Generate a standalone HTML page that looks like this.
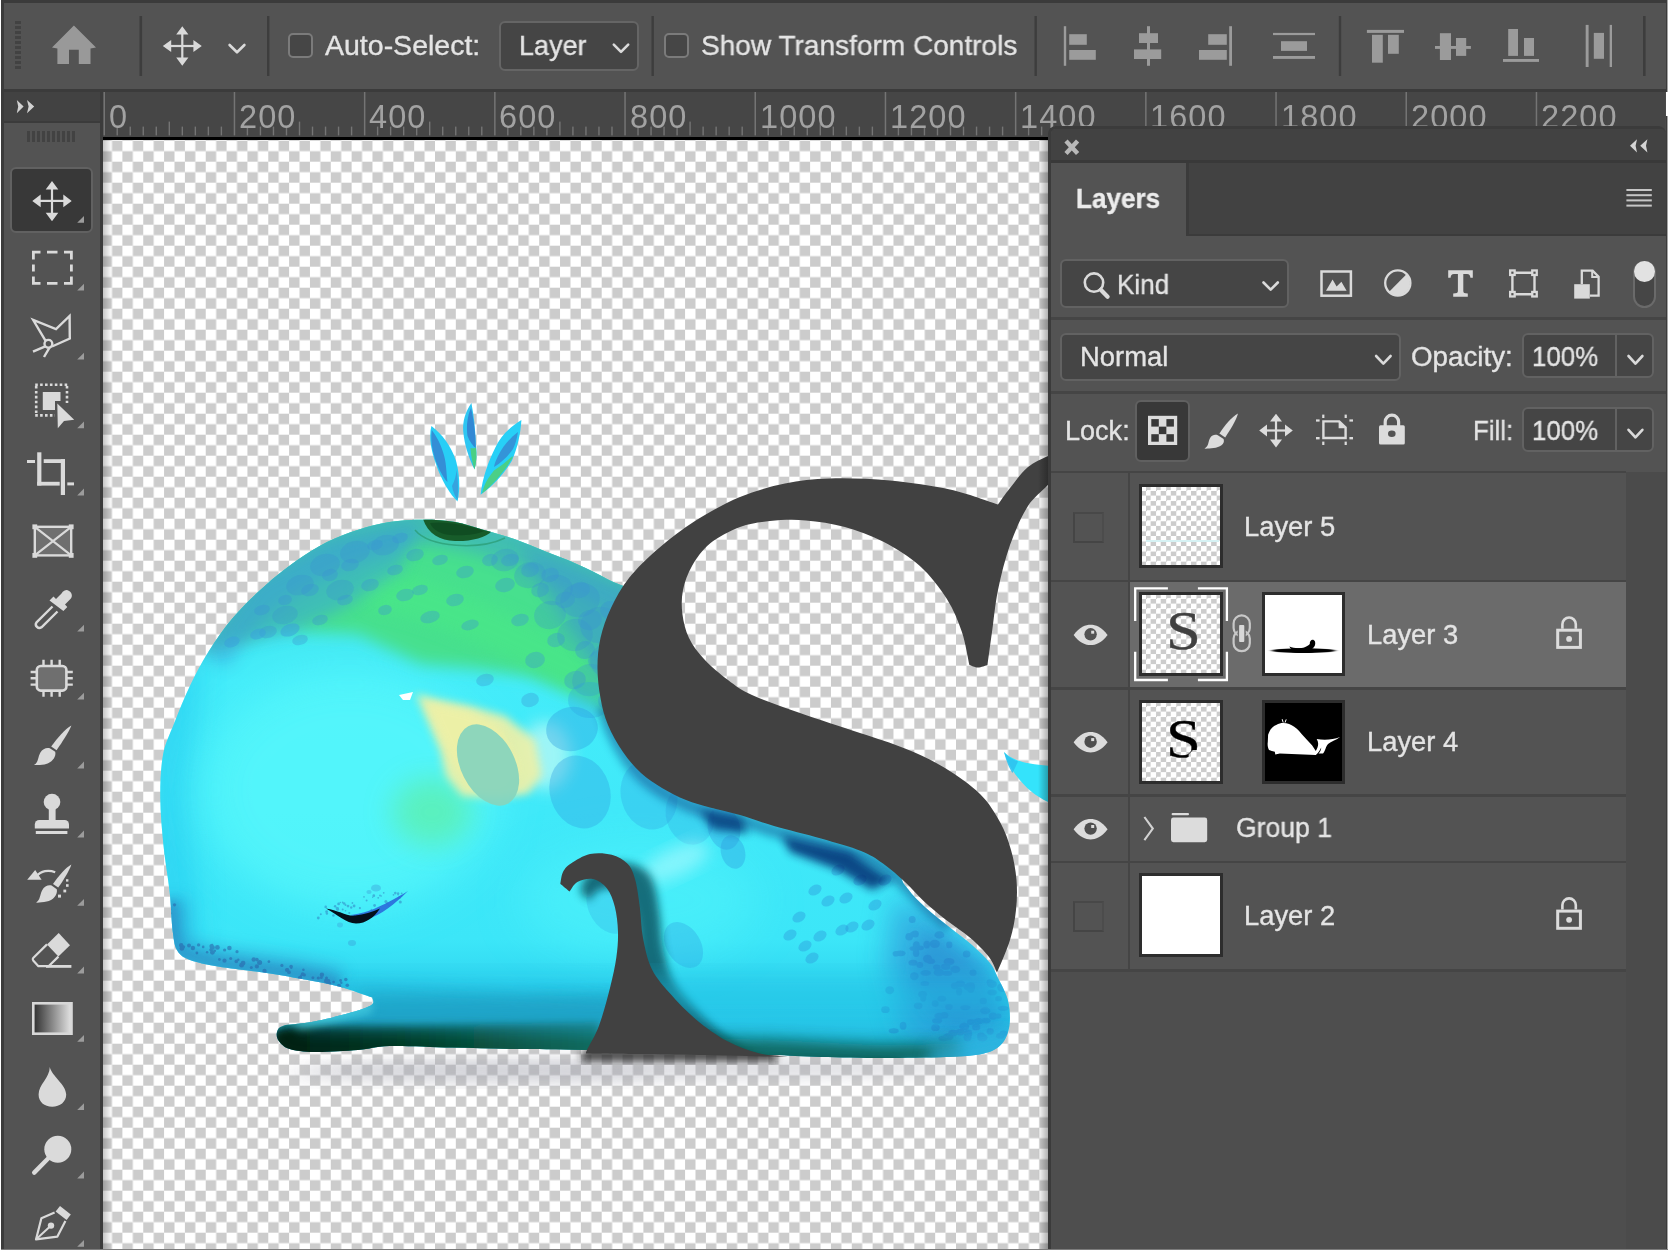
<!DOCTYPE html>
<html>
<head>
<meta charset="utf-8">
<title>Photoshop</title>
<style>
*{box-sizing:border-box;margin:0;padding:0}
html,body{width:1668px;height:1250px;overflow:hidden;background:#3b3b3b}
body{position:relative;font-family:"Liberation Sans",sans-serif;color:#e4e4e4}
.abs{position:absolute}
svg{position:absolute;overflow:visible;display:block}
.t{position:absolute;white-space:nowrap;line-height:1;transform-origin:0 0;will-change:transform;-webkit-text-stroke:.35px currentColor}
/* options bar */
#opt{left:4px;top:3px;width:1662px;height:86px;background:#535353}
.vsep{position:absolute;width:2px;background:#3e3e3e;top:16px;height:60px}
.cb{position:absolute;width:25px;height:25px;border:2px solid #7b7b7b;border-radius:5px;background:#464646}
.dd{position:absolute;border:2px solid #656565;border-radius:6px;background:#454545}
/* rulers */
#ruler{left:103px;top:92px;width:1563px;height:45px;background:#464646;overflow:hidden}
#ruler .n{position:absolute;top:9.2px;margin-left:-1px;font-size:32.5px;color:#a2a2a2;line-height:1;white-space:nowrap;letter-spacing:1.1px;will-change:transform}
#rtick{position:absolute;left:0;top:0}
/* toolbar */
#tbhead{left:4px;top:92px;width:96px;height:29px;background:#424242}
#tb{left:4px;top:123px;width:96px;height:1127px;background:#535353}
/* canvas */
#cv{left:103px;top:140px;width:945px;height:1110px;overflow:hidden;
background:#fff}
/* panel */
#pn{left:1048px;top:126px;width:618px;height:1124px;background:#535353;border-radius:8px 8px 0 0;overflow:hidden;border-left:3px solid #3b3b3b;border-top:3px solid #3b3b3b}
</style>
</head>
<body>
<!-- OPTIONS BAR -->
<div id="opt" class="abs"></div>
<div class="cb" style="left:288px;top:33px"></div>
<div class="dd" style="left:499px;top:21px;width:140px;height:50px"></div>
<div class="cb" style="left:664px;top:33px"></div>
<svg width="1668" height="92" viewBox="0 0 1668 92" style="left:0;top:0">
 <!-- grip -->
 <g fill="#424242">
  <rect x="15" y="21" width="6" height="3"/><rect x="15" y="26" width="6" height="3"/><rect x="15" y="31" width="6" height="3"/><rect x="15" y="36" width="6" height="3"/><rect x="15" y="41" width="6" height="3"/><rect x="15" y="46" width="6" height="3"/><rect x="15" y="51" width="6" height="3"/><rect x="15" y="56" width="6" height="3"/><rect x="15" y="61" width="6" height="3"/><rect x="15" y="66" width="6" height="3"/>
 </g>
 <!-- home -->
 <path fill="#999" d="M73.9 25.5 L96 47.5 L90.5 48.5 L90.5 64 L78.8 64 L78.8 49.8 L69 49.8 L69 64 L57.4 64 L57.4 48.5 L52 47.5 Z"/>
 <!-- separators -->
 <g fill="#3d3d3d">
  <rect x="139.5" y="16" width="2.6" height="60"/><rect x="267" y="16" width="2.4" height="60"/><rect x="651.5" y="16" width="2.4" height="60"/><rect x="1034.5" y="16" width="2.4" height="60"/><rect x="1338.8" y="16" width="2.4" height="60"/><rect x="1643" y="16" width="2.6" height="60"/>
 </g>
 <!-- move tool icon -->
 <g fill="#dadada" stroke="none">
  <rect x="170" y="44.9" width="24.6" height="2.2"/><rect x="181.2" y="33" width="2.2" height="26"/>
  <path d="M182.3 26.3 L188.4 34.6 L176.2 34.6 Z M182.3 65.8 L188.4 57.4 L176.2 57.4 Z M162.8 46 L171.2 39.9 L171.2 52.1 Z M201.8 46 L193.4 39.9 L193.4 52.1 Z"/>
 </g>
 <!-- chevrons -->
 <g fill="none" stroke="#dadada" stroke-width="2.6" stroke-linecap="round" stroke-linejoin="round">
  <path d="M229.6 45 L237 52.3 L244.4 45"/>
  <path d="M613.8 44.6 L621 51.8 L628.2 44.6"/>
 </g>
 <!-- align icons -->
 <g fill="#9b9b9b">
  <rect x="1063.8" y="26.2" width="2.4" height="39.6"/><rect x="1069.2" y="34.2" width="17.6" height="10.6"/><rect x="1069.2" y="50" width="26.6" height="9.8"/>
  <rect x="1147" y="26.2" width="3" height="39.6"/><rect x="1139" y="33.2" width="19" height="9.8"/><rect x="1134" y="49.4" width="27.2" height="9.6"/>
  <rect x="1229.2" y="26.2" width="2.8" height="39.6"/><rect x="1208.2" y="34.2" width="18.6" height="10.6"/><rect x="1199" y="50" width="27.8" height="9.8"/>
  <rect x="1273" y="32.9" width="42" height="2.2"/><rect x="1281" y="41.2" width="26" height="9.7"/><rect x="1273" y="56" width="42" height="2.9"/>
  <rect x="1366.9" y="29.9" width="37.1" height="3"/><rect x="1372" y="34.8" width="10.8" height="27.9"/><rect x="1388" y="34.8" width="10.8" height="19"/>
  <rect x="1435" y="46" width="35.9" height="2.9"/><rect x="1439.9" y="33.2" width="11.1" height="26.8"/><rect x="1456" y="38" width="10.2" height="17.9"/>
  <rect x="1503" y="59" width="36" height="2.9"/><rect x="1508.2" y="29" width="9.8" height="26.9"/><rect x="1524" y="38" width="10" height="17.9"/>
  <rect x="1585.7" y="24.9" width="2.9" height="42.1"/><rect x="1609.7" y="24.9" width="2.3" height="42.1"/><rect x="1593.8" y="32.9" width="10.2" height="25.9"/>
 </g>
</svg>
<div class="t" style="left:325px;top:30.8px;font-size:28.5px">Auto-Select:</div>
<div class="t" style="left:519.4px;top:30.8px;font-size:28.5px;transform:scaleX(.948)">Layer</div>
<div class="t" style="left:701px;top:30.8px;font-size:28.5px;transform:scaleX(.984)">Show Transform Controls</div>
<!-- RULER -->
<div id="ruler" class="abs"><svg id="rtick" width="1563" height="45" fill="#747474"><rect x="0.50" y="0" width="1.5" height="43.4"/><rect x="13.52" y="34.6" width="1.4" height="8.8"/><rect x="26.54" y="34.6" width="1.4" height="8.8"/><rect x="39.56" y="34.6" width="1.4" height="8.8"/><rect x="52.58" y="34.6" width="1.4" height="8.8"/><rect x="65.60" y="29.6" width="1.4" height="13.8"/><rect x="78.62" y="34.6" width="1.4" height="8.8"/><rect x="91.64" y="34.6" width="1.4" height="8.8"/><rect x="104.66" y="34.6" width="1.4" height="8.8"/><rect x="117.68" y="34.6" width="1.4" height="8.8"/><rect x="130.70" y="0" width="1.5" height="43.4"/><rect x="143.72" y="34.6" width="1.4" height="8.8"/><rect x="156.74" y="34.6" width="1.4" height="8.8"/><rect x="169.76" y="34.6" width="1.4" height="8.8"/><rect x="182.78" y="34.6" width="1.4" height="8.8"/><rect x="195.80" y="29.6" width="1.4" height="13.8"/><rect x="208.82" y="34.6" width="1.4" height="8.8"/><rect x="221.84" y="34.6" width="1.4" height="8.8"/><rect x="234.86" y="34.6" width="1.4" height="8.8"/><rect x="247.88" y="34.6" width="1.4" height="8.8"/><rect x="260.90" y="0" width="1.5" height="43.4"/><rect x="273.92" y="34.6" width="1.4" height="8.8"/><rect x="286.94" y="34.6" width="1.4" height="8.8"/><rect x="299.96" y="34.6" width="1.4" height="8.8"/><rect x="312.98" y="34.6" width="1.4" height="8.8"/><rect x="326.00" y="29.6" width="1.4" height="13.8"/><rect x="339.02" y="34.6" width="1.4" height="8.8"/><rect x="352.04" y="34.6" width="1.4" height="8.8"/><rect x="365.06" y="34.6" width="1.4" height="8.8"/><rect x="378.08" y="34.6" width="1.4" height="8.8"/><rect x="391.10" y="0" width="1.5" height="43.4"/><rect x="404.12" y="34.6" width="1.4" height="8.8"/><rect x="417.14" y="34.6" width="1.4" height="8.8"/><rect x="430.16" y="34.6" width="1.4" height="8.8"/><rect x="443.18" y="34.6" width="1.4" height="8.8"/><rect x="456.20" y="29.6" width="1.4" height="13.8"/><rect x="469.22" y="34.6" width="1.4" height="8.8"/><rect x="482.24" y="34.6" width="1.4" height="8.8"/><rect x="495.26" y="34.6" width="1.4" height="8.8"/><rect x="508.28" y="34.6" width="1.4" height="8.8"/><rect x="521.30" y="0" width="1.5" height="43.4"/><rect x="534.32" y="34.6" width="1.4" height="8.8"/><rect x="547.34" y="34.6" width="1.4" height="8.8"/><rect x="560.36" y="34.6" width="1.4" height="8.8"/><rect x="573.38" y="34.6" width="1.4" height="8.8"/><rect x="586.40" y="29.6" width="1.4" height="13.8"/><rect x="599.42" y="34.6" width="1.4" height="8.8"/><rect x="612.44" y="34.6" width="1.4" height="8.8"/><rect x="625.46" y="34.6" width="1.4" height="8.8"/><rect x="638.48" y="34.6" width="1.4" height="8.8"/><rect x="651.50" y="0" width="1.5" height="43.4"/><rect x="664.52" y="34.6" width="1.4" height="8.8"/><rect x="677.54" y="34.6" width="1.4" height="8.8"/><rect x="690.56" y="34.6" width="1.4" height="8.8"/><rect x="703.58" y="34.6" width="1.4" height="8.8"/><rect x="716.60" y="29.6" width="1.4" height="13.8"/><rect x="729.62" y="34.6" width="1.4" height="8.8"/><rect x="742.64" y="34.6" width="1.4" height="8.8"/><rect x="755.66" y="34.6" width="1.4" height="8.8"/><rect x="768.68" y="34.6" width="1.4" height="8.8"/><rect x="781.70" y="0" width="1.5" height="43.4"/><rect x="794.72" y="34.6" width="1.4" height="8.8"/><rect x="807.74" y="34.6" width="1.4" height="8.8"/><rect x="820.76" y="34.6" width="1.4" height="8.8"/><rect x="833.78" y="34.6" width="1.4" height="8.8"/><rect x="846.80" y="29.6" width="1.4" height="13.8"/><rect x="859.82" y="34.6" width="1.4" height="8.8"/><rect x="872.84" y="34.6" width="1.4" height="8.8"/><rect x="885.86" y="34.6" width="1.4" height="8.8"/><rect x="898.88" y="34.6" width="1.4" height="8.8"/><rect x="911.90" y="0" width="1.5" height="43.4"/><rect x="924.92" y="34.6" width="1.4" height="8.8"/><rect x="937.94" y="34.6" width="1.4" height="8.8"/><rect x="950.96" y="34.6" width="1.4" height="8.8"/><rect x="963.98" y="34.6" width="1.4" height="8.8"/><rect x="977.00" y="29.6" width="1.4" height="13.8"/><rect x="990.02" y="34.6" width="1.4" height="8.8"/><rect x="1003.04" y="34.6" width="1.4" height="8.8"/><rect x="1016.06" y="34.6" width="1.4" height="8.8"/><rect x="1029.08" y="34.6" width="1.4" height="8.8"/><rect x="1042.10" y="0" width="1.5" height="43.4"/><rect x="1055.12" y="34.6" width="1.4" height="8.8"/><rect x="1068.14" y="34.6" width="1.4" height="8.8"/><rect x="1081.16" y="34.6" width="1.4" height="8.8"/><rect x="1094.18" y="34.6" width="1.4" height="8.8"/><rect x="1107.20" y="29.6" width="1.4" height="13.8"/><rect x="1120.22" y="34.6" width="1.4" height="8.8"/><rect x="1133.24" y="34.6" width="1.4" height="8.8"/><rect x="1146.26" y="34.6" width="1.4" height="8.8"/><rect x="1159.28" y="34.6" width="1.4" height="8.8"/><rect x="1172.30" y="0" width="1.5" height="43.4"/><rect x="1185.32" y="34.6" width="1.4" height="8.8"/><rect x="1198.34" y="34.6" width="1.4" height="8.8"/><rect x="1211.36" y="34.6" width="1.4" height="8.8"/><rect x="1224.38" y="34.6" width="1.4" height="8.8"/><rect x="1237.40" y="29.6" width="1.4" height="13.8"/><rect x="1250.42" y="34.6" width="1.4" height="8.8"/><rect x="1263.44" y="34.6" width="1.4" height="8.8"/><rect x="1276.46" y="34.6" width="1.4" height="8.8"/><rect x="1289.48" y="34.6" width="1.4" height="8.8"/><rect x="1302.50" y="0" width="1.5" height="43.4"/><rect x="1315.52" y="34.6" width="1.4" height="8.8"/><rect x="1328.54" y="34.6" width="1.4" height="8.8"/><rect x="1341.56" y="34.6" width="1.4" height="8.8"/><rect x="1354.58" y="34.6" width="1.4" height="8.8"/><rect x="1367.60" y="29.6" width="1.4" height="13.8"/><rect x="1380.62" y="34.6" width="1.4" height="8.8"/><rect x="1393.64" y="34.6" width="1.4" height="8.8"/><rect x="1406.66" y="34.6" width="1.4" height="8.8"/><rect x="1419.68" y="34.6" width="1.4" height="8.8"/><rect x="1432.70" y="0" width="1.5" height="43.4"/><rect x="1445.72" y="34.6" width="1.4" height="8.8"/><rect x="1458.74" y="34.6" width="1.4" height="8.8"/><rect x="1471.76" y="34.6" width="1.4" height="8.8"/><rect x="1484.78" y="34.6" width="1.4" height="8.8"/><rect x="1497.80" y="29.6" width="1.4" height="13.8"/><rect x="1510.82" y="34.6" width="1.4" height="8.8"/><rect x="1523.84" y="34.6" width="1.4" height="8.8"/><rect x="1536.86" y="34.6" width="1.4" height="8.8"/><rect x="1549.88" y="34.6" width="1.4" height="8.8"/><rect x="1562.90" y="0" width="1.5" height="43.4"/></svg><div class="n" style="left:6.8px">0</div><div class="n" style="left:137.0px">200</div><div class="n" style="left:267.2px">400</div><div class="n" style="left:397.4px">600</div><div class="n" style="left:527.6px">800</div><div class="n" style="left:657.8px">1000</div><div class="n" style="left:788.0px">1200</div><div class="n" style="left:918.2px">1400</div><div class="n" style="left:1048.4px">1600</div><div class="n" style="left:1178.6px">1800</div><div class="n" style="left:1308.8px">2000</div><div class="n" style="left:1439.0px">2200</div><div class="n" style="left:1569.2px">2400</div></div>
<!-- TOOLBAR -->
<div id="tbhead" class="abs"></div>
<div id="tb" class="abs"></div>
<div class="abs" style="left:10px;top:166.5px;width:83px;height:66px;background:#383838;border:2px solid #616161;border-radius:6px"></div>
<svg width="104" height="1250" viewBox="0 0 104 1250" style="left:0;top:0">
 <!-- >> -->
 <path fill="#d2d2d2" d="M16.8 100 L23.6 106.6 L16.8 113.2 L18.2 106.6 Z M27 100 L34.2 106.6 L27 113.2 L28.6 106.6 Z"/>
 <!-- grip -->
 <g fill="#424242"><rect x="27" y="131" width="3" height="11"/><rect x="32" y="131" width="3" height="11"/><rect x="37" y="131" width="3" height="11"/><rect x="42" y="131" width="3" height="11"/><rect x="47" y="131" width="3" height="11"/><rect x="52" y="131" width="3" height="11"/><rect x="57" y="131" width="3" height="11"/><rect x="62" y="131" width="3" height="11"/><rect x="67" y="131" width="3" height="11"/><rect x="72" y="131" width="3" height="11"/></g>
 <g fill="#9c9c9c"><path d="M84 222.8 L84 216.0 L77.2 222.8 Z"/><path d="M84 290.6 L84 283.8 L77.2 290.6 Z"/><path d="M84 359.6 L84 352.8 L77.2 359.6 Z"/><path d="M84 428.2 L84 421.4 L77.2 428.2 Z"/><path d="M84 495.4 L84 488.59999999999997 L77.2 495.4 Z"/><path d="M84 631.5 L84 624.7 L77.2 631.5 Z"/><path d="M84 699.6 L84 692.8000000000001 L77.2 699.6 Z"/><path d="M84 768.4 L84 761.6 L77.2 768.4 Z"/><path d="M84 837.4 L84 830.6 L77.2 837.4 Z"/><path d="M84 905.8 L84 899.0 L77.2 905.8 Z"/><path d="M84 973.4 L84 966.6 L77.2 973.4 Z"/><path d="M84 1041.7 L84 1034.9 L77.2 1041.7 Z"/><path d="M84 1110 L84 1103.2 L77.2 1110 Z"/><path d="M84 1178.4 L84 1171.6000000000001 L77.2 1178.4 Z"/><path d="M84 1246.8 L84 1240.0 L77.2 1246.8 Z"/></g>
 <g fill="#dadada">
  <!-- move -->
  <rect x="39" y="199.8" width="26" height="2.2"/><rect x="50.9" y="188" width="2.2" height="26"/>
  <path d="M52 181 L58.3 189.4 L45.7 189.4 Z M52 221.2 L58.3 212.8 L45.7 212.8 Z M32.3 200.9 L40.7 194.6 L40.7 207.2 Z M71.7 200.9 L63.3 194.6 L63.3 207.2 Z"/>
 </g>
 <!-- marquee -->
 <g fill="none" stroke="#dadada" stroke-width="2.8">
  <path d="M33.4 259.5 L33.4 252.2 L40.5 252.2 M47 252.2 L57.5 252.2 M64 252.2 L71.4 252.2 L71.4 259.5 M71.4 264.5 L71.4 271.5 M71.4 276.5 L71.4 283.4 L64 283.4 M57.5 283.4 L47 283.4 M40.5 283.4 L33.4 283.4 L33.4 276.5 M33.4 271.5 L33.4 264.5"/>
 </g>
 <!-- polygon lasso -->
 <g fill="none" stroke="#dadada" stroke-width="2.4" stroke-linejoin="miter">
  <path d="M45.6 340.8 L33.2 320 L56 329 L69.6 316 L69.8 338.5 L52 346.5"/>
  <circle cx="48.4" cy="343.8" r="3.9"/>
  <path d="M45.3 346.3 L33 351.6 M49.5 347.6 L44 357"/>
 </g>
 <!-- object select -->
 <g fill="none" stroke="#dadada" stroke-width="2.6" stroke-dasharray="2.6 2.3">
  <path d="M35.2 384.8 L68 384.8"/><path d="M35.2 415.4 L55 415.4"/><path d="M36.2 386 L36.2 415"/><path d="M67 386 L67 403"/>
 </g>
 <path fill="#dadada" d="M42.8 392 L60.5 392 L60.5 401 L55 401 L55 410 L42.8 410 Z"/>
 <path fill="#dadada" d="M57.3 403.6 L74.2 419.8 L64 421 L57.8 428.2 Z"/>
 <!-- crop -->
 <g fill="#dadada">
  <rect x="37.2" y="452.3" width="4.2" height="33.2"/><rect x="27" y="460" width="8" height="3"/>
  <rect x="37.2" y="481.8" width="22.5" height="3.8"/><rect x="43.7" y="459.2" width="21.3" height="3.8"/>
  <rect x="60.8" y="459.2" width="4.2" height="35.8"/><rect x="67.3" y="482.4" width="6.7" height="3"/>
 </g>
 <!-- frame -->
 <rect x="34.8" y="526.8" width="36.4" height="28.6" fill="#6f6f6f" stroke="#dadada" stroke-width="2.4"/>
 <path d="M34.8 526.8 L71.2 555.4 M71.2 526.8 L34.8 555.4" stroke="#dadada" stroke-width="2.2" fill="none"/>
 <g fill="#dadada"><rect x="32.4" y="524.4" width="4.8" height="4.8"/><rect x="68.8" y="524.4" width="4.8" height="4.8"/><rect x="32.4" y="553" width="4.8" height="4.8"/><rect x="68.8" y="553" width="4.8" height="4.8"/></g>
 <!-- eyedropper -->
 <g>
  <path d="M52.5 606.5 L36.5 622.3 a3.6 3.6 0 0 0 5 5 L57.5 611.5" fill="none" stroke="#dadada" stroke-width="2.4" stroke-linejoin="round"/>
  <path fill="#dadada" d="M49.5 600.5 L53.5 596.5 L56 599 L61.5 593.5 a5.2 5.2 0 0 1 7.6 -2.6 a5.2 5.2 0 0 1 0.6 8.8 L65 604.5 L67.3 607 L63.4 611 Z"/>
 </g>
 <!-- patch -->
 <g>
  <rect x="36.8" y="666" width="29.6" height="24.6" rx="4" fill="#6f6f6f" stroke="#dadada" stroke-width="2.6"/>
  <g stroke="#dadada" stroke-width="2.4">
   <path d="M43.5 659.8 V666 M51.6 659.8 V666 M59.7 659.8 V666 M43.5 690.6 V696.8 M51.6 690.6 V696.8 M59.7 690.6 V696.8"/>
   <path d="M30.6 672 H36.8 M30.6 678.3 H36.8 M30.6 684.6 H36.8 M66.4 672 H72.8 M66.4 678.3 H72.8 M66.4 684.6 H72.8"/>
  </g>
 </g>
 <!-- brush -->
 <g fill="#dadada">
  <path d="M71.4 725.6 C69 732 62 742.5 56.6 750.2 L51.2 746.6 C57 738.6 65.2 728.8 71.4 725.6 Z"/>
  <path d="M49.8 748.2 L55.2 751.8 C56.6 757.5 51 763.6 44.4 764.4 C40.5 764.9 36.4 765.2 34 765 C38.6 762.4 37.6 757.4 40.4 752.4 C42.6 748.6 46.6 747.2 49.8 748.2 Z"/>
 </g>
 <!-- stamp -->
 <g fill="#dadada">
  <circle cx="52" cy="802" r="8.3"/><rect x="48.8" y="806" width="6.8" height="15"/>
  <path d="M34.8 828.4 L34.8 824.4 a4.4 4.4 0 0 1 4.4 -4.4 L64.6 820 a4.4 4.4 0 0 1 4.4 4.4 L69 828.4 Z"/>
  <rect x="35.8" y="831" width="31.6" height="3"/>
 </g>
 <!-- history brush -->
 <g fill="#dadada">
  <path d="M71.4 864.4 C69.4 870.4 63.6 880 58.2 887.6 L53 884 C58.6 876 65.4 867.6 71.4 864.4 Z"/>
  <path d="M51.6 885.6 L56.8 889.2 C58 894.6 53 900.6 46.6 901.6 C42.8 902.2 38.4 902.8 36 902.6 C40.4 900.2 39.6 895 42.2 890.2 C44.2 886.4 48.4 884.6 51.6 885.6 Z"/>
  <path d="M27.2 879.8 L35.2 870 L41.6 879.8 Z"/>
  <rect x="58" y="894.6" width="3" height="3"/><rect x="63.4" y="889.6" width="2.8" height="2.8"/><rect x="66" y="884.2" width="2.6" height="2.6"/><rect x="66" y="879.2" width="2.4" height="2.4"/>
 </g>
 <path d="M36.6 876.4 C40.8 870.6 48.6 869.6 55.2 872.2" fill="none" stroke="#dadada" stroke-width="2.2"/>
 <!-- eraser -->
 <g>
  <path d="M58.7 933 L70 945.2 L58.4 956.6 L47 944.4 Z" fill="#dadada"/>
  <path d="M47 944.4 L33.2 958 a2 2 0 0 0 0 2.6 L38.4 966.2 L48.6 966.2 L58.4 956.6" fill="none" stroke="#dadada" stroke-width="2.2" stroke-linejoin="round"/>
  <rect x="46" y="965" width="25.4" height="2.8" fill="#dadada"/>
 </g>
 <!-- gradient -->
 <defs><linearGradient id="tg" x1="0" x2="1" y1="0" y2="0"><stop offset="0" stop-color="#2e2e2e"/><stop offset="1" stop-color="#e4e4e4"/></linearGradient></defs>
 <rect x="33.3" y="1003.3" width="38.2" height="30.4" fill="url(#tg)" stroke="#d8d8d8" stroke-width="2.6"/>
 <!-- blur drop -->
 <path fill="#dadada" d="M49.8 1067 C51.6 1076 66.2 1084.6 66.2 1094.6 C66.2 1102 60 1106.8 52.2 1106.8 C44.4 1106.8 38.6 1102 38.6 1094.6 C38.6 1084.6 49.6 1078 49.8 1067 Z"/>
 <!-- dodge -->
 <circle cx="57.8" cy="1149.3" r="13.5" fill="#dadada"/>
 <path d="M48.6 1158 L34.2 1172.6" stroke="#dadada" stroke-width="4.4" stroke-linecap="round"/>
 <!-- pen -->
 <g>
  <path d="M60 1206 L70.8 1214.6 L66.6 1220 L55.6 1211.4 Z" fill="#dadada"/>
  <path d="M54.6 1212.4 L41.4 1218.2 L36 1239.4 L57.4 1236.6 L65.4 1221" fill="none" stroke="#dadada" stroke-width="2.2" stroke-linejoin="round"/>
  <path d="M36.4 1239 L50 1226.6" stroke="#dadada" stroke-width="2"/>
  <circle cx="51" cy="1225.6" r="3.2" fill="#dadada"/>
 </g>
</svg>
<!-- CANVAS -->
<div class="abs" style="left:103px;top:137px;width:945px;height:3px;background:#000"></div>
<div id="cv" class="abs">
<svg width="945" height="1110" viewBox="103 140 945 1110" style="left:0;top:0;overflow:hidden">
<defs>
 <pattern id="chk" x="101.55" y="140.7" width="20.84" height="21" patternUnits="userSpaceOnUse">
  <rect x="10.42" y="0" width="10.42" height="10.5" fill="#ccc"/><rect x="0" y="10.5" width="10.42" height="10.5" fill="#ccc"/>
 </pattern>
 <clipPath id="wc"><path d="M372.4 997.6 C366.9 995.8 351.3 989.8 339.6 986.7 C327.9 983.6 314.5 981.3 302.0 979.0 C289.5 976.7 278.8 974.8 264.8 972.7 C250.8 970.6 230.5 968.5 218.0 966.4 C205.5 964.3 196.8 962.6 190.0 960.0 C183.2 957.4 180.3 955.5 177.4 950.8 C174.5 946.1 174.1 941.9 172.8 932.0 C171.5 922.1 171.2 906.1 169.6 891.6 C168.0 877.1 164.9 860.4 163.4 844.8 C161.9 829.2 160.4 813.0 160.3 798.0 C160.2 783.0 160.7 767.5 163.0 755.0 C165.3 742.5 169.8 734.5 174.3 723.0 C178.8 711.5 184.3 697.6 190.0 685.7 C195.7 673.8 201.3 662.9 208.6 651.4 C215.9 639.9 224.2 627.9 233.6 617.0 C243.0 606.1 254.4 595.2 264.8 585.9 C275.2 576.6 285.6 568.3 296.0 561.0 C306.4 553.7 316.6 547.2 327.0 542.0 C337.4 536.8 347.9 533.0 358.3 529.7 C368.7 526.4 378.6 523.7 389.5 522.0 C400.4 520.3 412.9 519.7 423.8 519.7 C434.7 519.7 445.1 520.3 455.0 522.0 C464.9 523.7 473.1 526.9 483.0 529.7 C492.9 532.5 503.9 535.4 514.3 539.0 C524.7 542.6 535.1 547.4 545.5 551.6 C555.9 555.8 566.3 559.3 576.7 564.0 C587.1 568.7 597.5 573.6 608.0 579.6 C618.5 585.6 633.3 586.6 640.0 600.0 C646.7 613.4 641.3 639.7 648.0 660.0 C654.7 680.3 670.2 708.3 680.0 722.0 C689.8 735.7 692.0 734.7 707.0 742.0 C722.0 749.3 747.8 758.3 770.0 766.0 C792.2 773.7 820.0 780.7 840.0 788.0 C860.0 795.3 880.0 796.0 890.0 810.0 C900.0 824.0 897.0 858.8 900.0 872.0 C903.0 885.2 903.7 883.0 908.0 889.0 C912.3 895.0 919.3 901.8 926.0 908.0 C932.7 914.2 940.3 919.8 948.0 926.0 C955.7 932.2 965.0 938.8 972.0 945.0 C979.0 951.2 985.7 957.5 990.0 963.0 C994.3 968.5 995.0 971.7 998.0 978.0 C1001.0 984.3 1006.1 992.8 1008.0 1000.7 C1009.9 1008.7 1010.5 1018.5 1009.4 1025.7 C1008.3 1032.9 1006.0 1039.3 1001.6 1044.0 C997.2 1048.7 992.4 1051.5 983.0 1053.7 C973.6 1055.9 962.2 1056.3 945.5 1057.0 C928.8 1057.7 903.8 1058.0 883.0 1058.0 C862.2 1058.0 838.9 1057.5 820.7 1057.0 C802.5 1056.5 787.0 1055.3 774.0 1055.0 C761.0 1054.7 755.0 1055.2 742.7 1055.0 C730.4 1054.8 726.1 1054.8 700.0 1054.0 C673.9 1053.2 617.0 1050.8 586.0 1050.0 C555.0 1049.2 536.3 1049.4 514.0 1049.0 C491.7 1048.6 472.8 1048.0 452.0 1047.5 C431.2 1047.0 405.2 1045.6 389.5 1046.0 C373.8 1046.4 370.5 1049.0 358.0 1050.0 C345.5 1051.0 326.1 1052.2 314.7 1052.0 C303.3 1051.8 295.7 1050.8 289.7 1049.0 C283.7 1047.2 280.9 1043.8 278.8 1041.0 C276.7 1038.2 276.2 1034.5 277.0 1032.0 C277.8 1029.5 278.3 1027.3 283.5 1025.7 C288.7 1024.1 298.5 1024.4 308.4 1022.6 C318.3 1020.8 332.3 1017.7 342.7 1014.8 C353.1 1011.9 365.9 1008.3 370.8 1005.4 C375.8 1002.5 372.1 998.9 372.4 997.6 Z"/></clipPath>
 <filter id="b1" x="-30%" y="-30%" width="160%" height="160%"><feGaussianBlur stdDeviation="1"/></filter>
 <filter id="b4" x="-30%" y="-30%" width="160%" height="160%"><feGaussianBlur stdDeviation="4"/></filter>
 <filter id="b8" x="-30%" y="-30%" width="160%" height="160%"><feGaussianBlur stdDeviation="8"/></filter>
 <filter id="b14" x="-40%" y="-40%" width="180%" height="180%"><feGaussianBlur stdDeviation="14"/></filter>
 <filter id="b22" x="-50%" y="-50%" width="200%" height="200%"><feGaussianBlur stdDeviation="22"/></filter>
 <linearGradient id="botg" x1="280" y1="0" x2="600" y2="0" gradientUnits="userSpaceOnUse"><stop offset="0" stop-color="#031a0e" stop-opacity=".95"/><stop offset=".45" stop-color="#063c24" stop-opacity=".92"/><stop offset="1" stop-color="#0b6a5c" stop-opacity=".8"/></linearGradient>
 <linearGradient id="wbase" x1="0" y1="520" x2="0" y2="1058" gradientUnits="userSpaceOnUse">
  <stop offset="0" stop-color="#44e0e0"/><stop offset=".3" stop-color="#44ecfa"/><stop offset=".78" stop-color="#3ce6f8"/><stop offset=".9" stop-color="#2cd0ee"/><stop offset="1" stop-color="#1eb4dc"/>
 </linearGradient>
</defs>
<rect x="103" y="140" width="945" height="1110" fill="url(#chk)"/>
<!-- ground shadow -->
<ellipse cx="640" cy="1068" rx="335" ry="11" fill="#a0a2ae" opacity=".36" filter="url(#b8)"/>
<ellipse cx="470" cy="1074" rx="190" ry="9" fill="#a4a6b0" opacity=".3" filter="url(#b8)"/>
<!-- S base shadow -->
<path d="M582 1050 L775 1050 L775 1061 L582 1061 Z" fill="#1c1c1c" opacity=".85" filter="url(#b4)"/>
<!-- whale -->
<g clip-path="url(#wc)">
 <rect x="140" y="500" width="900" height="580" fill="url(#wbase)"/>
 <path d="M150 700 L205 640 L190 800 L200 960 L150 960 Z" fill="#22c6ee" opacity=".5" filter="url(#b14)"/>
<ellipse cx="350" cy="790" rx="150" ry="120" fill="#58f8fb" opacity=".75" filter="url(#b22)"/>
<ellipse cx="640" cy="900" rx="120" ry="60" fill="#52f4fb" opacity=".5" filter="url(#b22)"/>
<path d="M200 650 L250 575 L330 530 L424 505 L545 540 L660 590 L680 740 L640 735 L602 706 L530 676 L470 668 L421 664 L358 634 L280 630 Z" fill="#46e08e" filter="url(#b8)"/>
<path d="M380 590 C440 600 520 640 620 690" fill="none" stroke="#49e688" stroke-width="40" stroke-linecap="round" opacity=".8" filter="url(#b8)"/>
<path d="M205 655 C240 590 320 535 424 518 C500 525 580 560 650 605" fill="none" stroke="#3a96da" stroke-width="52" opacity=".45" filter="url(#b8)"/>
<path d="M205 650 L255 580 L330 540 L420 522 L400 570 L340 610 L285 634 Z" fill="#389ce0" opacity=".5" filter="url(#b8)"/>
<path d="M520 545 L650 600 L660 720 L610 685 L565 620 Z" fill="#3a94d8" opacity=".5" filter="url(#b8)"/>
<ellipse cx="530" cy="575" rx="16" ry="13" transform="rotate(-15 530 575)" fill="#3a8ed2" opacity="0.28"/>
<ellipse cx="555" cy="590" rx="18" ry="15" transform="rotate(-15 555 590)" fill="#3a8ed2" opacity="0.28"/>
<ellipse cx="580" cy="600" rx="20" ry="17" transform="rotate(-15 580 600)" fill="#3a8ed2" opacity="0.28"/>
<ellipse cx="600" cy="625" rx="20" ry="18" transform="rotate(-15 600 625)" fill="#3a8ed2" opacity="0.28"/>
<ellipse cx="575" cy="635" rx="18" ry="16" transform="rotate(-15 575 635)" fill="#3a8ed2" opacity="0.28"/>
<ellipse cx="610" cy="660" rx="20" ry="18" transform="rotate(-15 610 660)" fill="#3a8ed2" opacity="0.28"/>
<ellipse cx="590" cy="680" rx="18" ry="16" transform="rotate(-15 590 680)" fill="#3a8ed2" opacity="0.28"/>
<ellipse cx="550" cy="615" rx="16" ry="14" transform="rotate(-15 550 615)" fill="#3a8ed2" opacity="0.28"/>
<ellipse cx="622" cy="700" rx="18" ry="16" transform="rotate(-15 622 700)" fill="#3a8ed2" opacity="0.28"/>
<ellipse cx="625" cy="630" rx="16" ry="16" transform="rotate(-15 625 630)" fill="#3a8ed2" opacity="0.28"/>
<ellipse cx="505" cy="560" rx="14" ry="11" transform="rotate(-15 505 560)" fill="#3a8ed2" opacity="0.28"/>
<ellipse cx="300" cy="585" rx="14" ry="10" transform="rotate(-15 300 585)" fill="#3a8ed2" opacity="0.28"/>
<ellipse cx="325" cy="565" rx="15" ry="11" transform="rotate(-15 325 565)" fill="#3a8ed2" opacity="0.28"/>
<ellipse cx="355" cy="552" rx="15" ry="11" transform="rotate(-15 355 552)" fill="#3a8ed2" opacity="0.28"/>
<ellipse cx="285" cy="615" rx="13" ry="9" transform="rotate(-15 285 615)" fill="#3a8ed2" opacity="0.28"/>
<ellipse cx="340" cy="590" rx="14" ry="10" transform="rotate(-15 340 590)" fill="#3a8ed2" opacity="0.28"/>
<ellipse cx="385" cy="545" rx="14" ry="10" transform="rotate(-15 385 545)" fill="#3a8ed2" opacity="0.28"/>
<g><ellipse cx="268" cy="632" rx="9" ry="6" transform="rotate(-15 268 632)" fill="#3a92d2" opacity="0.34"/><ellipse cx="300" cy="640" rx="8" ry="5" transform="rotate(-15 300 640)" fill="#3a92d2" opacity="0.34"/><ellipse cx="262" cy="610" rx="8" ry="5" transform="rotate(-15 262 610)" fill="#3a92d2" opacity="0.34"/><ellipse cx="285" cy="600" rx="7" ry="5" transform="rotate(-15 285 600)" fill="#3a92d2" opacity="0.34"/><ellipse cx="310" cy="590" rx="9" ry="6" transform="rotate(-15 310 590)" fill="#3a92d2" opacity="0.34"/><ellipse cx="330" cy="575" rx="8" ry="6" transform="rotate(-15 330 575)" fill="#3a92d2" opacity="0.34"/><ellipse cx="350" cy="565" rx="9" ry="6" transform="rotate(-15 350 565)" fill="#3a92d2" opacity="0.34"/><ellipse cx="345" cy="600" rx="8" ry="5" transform="rotate(-15 345 600)" fill="#3a92d2" opacity="0.34"/><ellipse cx="370" cy="585" rx="9" ry="6" transform="rotate(-15 370 585)" fill="#3a92d2" opacity="0.34"/><ellipse cx="395" cy="570" rx="8" ry="5" transform="rotate(-15 395 570)" fill="#3a92d2" opacity="0.34"/><ellipse cx="415" cy="555" rx="9" ry="6" transform="rotate(-15 415 555)" fill="#3a92d2" opacity="0.34"/><ellipse cx="440" cy="560" rx="8" ry="5" transform="rotate(-15 440 560)" fill="#3a92d2" opacity="0.34"/><ellipse cx="465" cy="572" rx="9" ry="6" transform="rotate(-15 465 572)" fill="#3a92d2" opacity="0.34"/><ellipse cx="490" cy="560" rx="8" ry="6" transform="rotate(-15 490 560)" fill="#3a92d2" opacity="0.34"/><ellipse cx="505" cy="585" rx="10" ry="7" transform="rotate(-15 505 585)" fill="#3a92d2" opacity="0.34"/><ellipse cx="455" cy="600" rx="9" ry="6" transform="rotate(-15 455 600)" fill="#3a92d2" opacity="0.34"/><ellipse cx="420" cy="590" rx="8" ry="5" transform="rotate(-15 420 590)" fill="#3a92d2" opacity="0.34"/><ellipse cx="385" cy="610" rx="7" ry="5" transform="rotate(-15 385 610)" fill="#3a92d2" opacity="0.34"/><ellipse cx="320" cy="620" rx="8" ry="5" transform="rotate(-15 320 620)" fill="#3a92d2" opacity="0.34"/><ellipse cx="405" cy="595" rx="9" ry="6" transform="rotate(-15 405 595)" fill="#3a92d2" opacity="0.34"/><ellipse cx="430" cy="617" rx="10" ry="6" transform="rotate(-15 430 617)" fill="#3a92d2" opacity="0.34"/><ellipse cx="540" cy="590" rx="9" ry="7" transform="rotate(-15 540 590)" fill="#3a92d2" opacity="0.34"/><ellipse cx="565" cy="600" rx="10" ry="8" transform="rotate(-15 565 600)" fill="#3a92d2" opacity="0.34"/><ellipse cx="520" cy="620" rx="9" ry="6" transform="rotate(-15 520 620)" fill="#3a92d2" opacity="0.34"/><ellipse cx="470" cy="625" rx="9" ry="5" transform="rotate(-15 470 625)" fill="#3a92d2" opacity="0.34"/><ellipse cx="556" cy="640" rx="9" ry="7" transform="rotate(-15 556 640)" fill="#3a92d2" opacity="0.34"/><ellipse cx="590" cy="620" rx="12" ry="10" transform="rotate(-15 590 620)" fill="#3a92d2" opacity="0.34"/><ellipse cx="600" cy="660" rx="12" ry="10" transform="rotate(-15 600 660)" fill="#3a92d2" opacity="0.34"/><ellipse cx="575" cy="680" rx="11" ry="9" transform="rotate(-15 575 680)" fill="#3a92d2" opacity="0.34"/><ellipse cx="535" cy="660" rx="10" ry="8" transform="rotate(-15 535 660)" fill="#3a92d2" opacity="0.34"/><ellipse cx="610" cy="700" rx="12" ry="10" transform="rotate(-15 610 700)" fill="#3a92d2" opacity="0.34"/><ellipse cx="485" cy="680" rx="9" ry="6" transform="rotate(-15 485 680)" fill="#3a92d2" opacity="0.34"/><ellipse cx="530" cy="700" rx="9" ry="7" transform="rotate(-15 530 700)" fill="#3a92d2" opacity="0.34"/><ellipse cx="375" cy="545" rx="8" ry="5" transform="rotate(-15 375 545)" fill="#3a92d2" opacity="0.34"/><ellipse cx="400" cy="538" rx="8" ry="5" transform="rotate(-15 400 538)" fill="#3a92d2" opacity="0.34"/><ellipse cx="510" cy="560" rx="9" ry="6" transform="rotate(-15 510 560)" fill="#3a92d2" opacity="0.34"/><ellipse cx="530" cy="570" rx="9" ry="7" transform="rotate(-15 530 570)" fill="#3a92d2" opacity="0.34"/><ellipse cx="550" cy="575" rx="9" ry="7" transform="rotate(-15 550 575)" fill="#3a92d2" opacity="0.34"/><ellipse cx="580" cy="590" rx="10" ry="8" transform="rotate(-15 580 590)" fill="#3a92d2" opacity="0.34"/><ellipse cx="610" cy="610" rx="10" ry="9" transform="rotate(-15 610 610)" fill="#3a92d2" opacity="0.34"/><ellipse cx="620" cy="650" rx="11" ry="10" transform="rotate(-15 620 650)" fill="#3a92d2" opacity="0.34"/><ellipse cx="585" cy="650" rx="10" ry="9" transform="rotate(-15 585 650)" fill="#3a92d2" opacity="0.34"/></g>
<ellipse cx="232" cy="642" rx="8" ry="5" transform="rotate(-20 232 642)" fill="#3aa0dc" opacity="0.5"/><ellipse cx="258" cy="634" rx="8" ry="5" transform="rotate(-20 258 634)" fill="#3aa0dc" opacity="0.5"/><ellipse cx="290" cy="630" rx="10" ry="6" transform="rotate(-20 290 630)" fill="#3aa0dc" opacity="0.5"/>
<ellipse cx="432" cy="812" rx="40" ry="34" fill="#5cf0b4" opacity=".85" filter="url(#b14)"/>
<ellipse cx="545" cy="756" rx="26" ry="34" fill="#b4f8f6" opacity=".8" filter="url(#b8)"/>
<path d="M416 694 L440 700 L470 706 L505 716 L535 740 L542 775 L528 794 L500 798 L462 796 L446 776 L440 750 L428 722 Z" fill="#e9f0aa" opacity=".95" filter="url(#b4)"/>
<path d="M426 702 L470 712 L500 728 L520 770 L500 790 L470 786 L452 760 Z" fill="#eef0a6" opacity=".9" filter="url(#b4)"/>
<ellipse cx="488" cy="765" rx="27" ry="43.5" transform="rotate(-27 488 765)" fill="#86d4bc" opacity="0.93"/>
<ellipse cx="572" cy="729" rx="26" ry="22" transform="rotate(-10 572 729)" fill="#2f9fe0" opacity="0.38"/>
<ellipse cx="580" cy="792" rx="30" ry="37" transform="rotate(-18 580 792)" fill="#2f9fe0" opacity="0.36"/>
<ellipse cx="590" cy="700" rx="22" ry="18" transform="rotate(0 590 700)" fill="#2f9fe0" opacity="0.3"/>
<ellipse cx="649" cy="795" rx="28" ry="35" transform="rotate(-15 649 795)" fill="#2f9fe0" opacity="0.3"/>
<ellipse cx="690" cy="815" rx="24" ry="30" transform="rotate(-15 690 815)" fill="#2f9fe0" opacity="0.28"/>
<ellipse cx="724" cy="828" rx="16" ry="22" transform="rotate(-15 724 828)" fill="#2f9fe0" opacity="0.4"/>
<ellipse cx="733" cy="852" rx="12" ry="17" transform="rotate(-15 733 852)" fill="#2f9fe0" opacity="0.4"/>
<ellipse cx="683.5" cy="945" rx="17" ry="25" transform="rotate(-32 683.5 945)" fill="#2f9fe0" opacity="0.33"/>
<ellipse cx="610" cy="905" rx="22" ry="30" transform="rotate(-25 610 905)" fill="#2f9fe0" opacity="0.25"/>
<ellipse cx="676" cy="862" rx="36" ry="14" transform="rotate(-25 676 862)" fill="#b8fcff" opacity=".55" filter="url(#b8)"/>
<ellipse cx="799" cy="917" rx="7" ry="5" transform="rotate(-30 799 917)" fill="#2e96da" opacity="0.4"/>
<ellipse cx="820" cy="936" rx="7" ry="5" transform="rotate(-30 820 936)" fill="#2e96da" opacity="0.4"/>
<ellipse cx="805" cy="946" rx="7" ry="5" transform="rotate(-30 805 946)" fill="#2e96da" opacity="0.4"/>
<ellipse cx="842" cy="930" rx="7" ry="5" transform="rotate(-30 842 930)" fill="#2e96da" opacity="0.4"/>
<ellipse cx="852" cy="927" rx="7" ry="5" transform="rotate(-30 852 927)" fill="#2e96da" opacity="0.4"/>
<ellipse cx="828" cy="901" rx="7" ry="5" transform="rotate(-30 828 901)" fill="#2e96da" opacity="0.4"/>
<ellipse cx="846" cy="898" rx="7" ry="5" transform="rotate(-30 846 898)" fill="#2e96da" opacity="0.4"/>
<ellipse cx="815" cy="890" rx="7" ry="5" transform="rotate(-30 815 890)" fill="#2e96da" opacity="0.4"/>
<ellipse cx="860" cy="880" rx="7" ry="5" transform="rotate(-30 860 880)" fill="#2e96da" opacity="0.4"/>
<ellipse cx="875" cy="905" rx="7" ry="5" transform="rotate(-30 875 905)" fill="#2e96da" opacity="0.4"/>
<ellipse cx="838" cy="870" rx="7" ry="5" transform="rotate(-30 838 870)" fill="#2e96da" opacity="0.4"/>
<ellipse cx="790" cy="935" rx="7" ry="5" transform="rotate(-30 790 935)" fill="#2e96da" opacity="0.4"/>
<ellipse cx="812" cy="958" rx="7" ry="5" transform="rotate(-30 812 958)" fill="#2e96da" opacity="0.4"/>
<ellipse cx="868" cy="925" rx="7" ry="5" transform="rotate(-30 868 925)" fill="#2e96da" opacity="0.4"/>
<ellipse cx="885" cy="880" rx="7" ry="5" transform="rotate(-30 885 880)" fill="#2e96da" opacity="0.4"/>
<path d="M895 895 L960 930 L1002 975 L1012 1030 L960 1046 L905 1035 L885 960 Z" fill="#2a86d0" opacity=".55" filter="url(#b14)"/>
<path d="M925 925 L985 968 L1000 1015 L950 1028 L912 985 Z" fill="#2878c8" opacity=".35" filter="url(#b8)"/>
<g fill="#2476c6" opacity=".3"><ellipse cx="949.3" cy="944.9" rx="3.1" ry="3.3"/><ellipse cx="895.9" cy="953.7" rx="3.3" ry="2.8"/><ellipse cx="960.3" cy="1032.2" rx="4.4" ry="3.1"/><ellipse cx="954.8" cy="985.8" rx="3.9" ry="3.4"/><ellipse cx="966.6" cy="954.1" rx="3.8" ry="3.5"/><ellipse cx="939.4" cy="935.0" rx="5.0" ry="3.7"/><ellipse cx="914.3" cy="976.2" rx="4.3" ry="4.0"/><ellipse cx="935.2" cy="1003.6" rx="3.4" ry="3.3"/><ellipse cx="889.7" cy="990.2" rx="4.4" ry="4.0"/><ellipse cx="922.6" cy="994.3" rx="4.5" ry="3.4"/><ellipse cx="939.7" cy="1016.0" rx="5.4" ry="3.3"/><ellipse cx="969.2" cy="987.1" rx="5.5" ry="3.9"/><ellipse cx="919.2" cy="947.9" rx="4.7" ry="2.4"/><ellipse cx="914.7" cy="948.6" rx="5.2" ry="2.5"/><ellipse cx="938.9" cy="972.4" rx="5.2" ry="3.9"/><ellipse cx="934.8" cy="943.8" rx="5.2" ry="4.1"/><ellipse cx="913.0" cy="962.7" rx="4.5" ry="2.9"/><ellipse cx="953.0" cy="1033.0" rx="4.7" ry="3.3"/><ellipse cx="959.1" cy="991.4" rx="3.1" ry="4.0"/><ellipse cx="978.6" cy="1021.2" rx="5.0" ry="3.1"/><ellipse cx="989.9" cy="982.1" rx="3.4" ry="2.9"/><ellipse cx="926.7" cy="944.6" rx="3.3" ry="3.9"/><ellipse cx="948.4" cy="1036.8" rx="5.2" ry="3.7"/><ellipse cx="916.3" cy="945.0" rx="3.4" ry="3.8"/><ellipse cx="948.9" cy="1006.9" rx="3.8" ry="2.8"/><ellipse cx="982.4" cy="1037.7" rx="5.1" ry="3.9"/><ellipse cx="983.2" cy="1001.0" rx="3.6" ry="3.3"/><ellipse cx="968.1" cy="1033.5" rx="4.1" ry="4.1"/><ellipse cx="1003.6" cy="1033.3" rx="3.9" ry="2.8"/><ellipse cx="912.2" cy="919.5" rx="3.5" ry="3.5"/><ellipse cx="993.0" cy="1016.1" rx="4.2" ry="3.6"/><ellipse cx="964.3" cy="1026.5" rx="5.0" ry="3.8"/><ellipse cx="981.1" cy="1035.7" rx="4.0" ry="3.1"/><ellipse cx="998.6" cy="998.7" rx="3.4" ry="2.6"/><ellipse cx="903.1" cy="1025.7" rx="3.4" ry="3.9"/><ellipse cx="1002.6" cy="988.6" rx="3.9" ry="3.4"/><ellipse cx="1001.5" cy="987.5" rx="4.3" ry="4.1"/><ellipse cx="937.1" cy="1020.8" rx="5.1" ry="2.8"/><ellipse cx="915.2" cy="933.9" rx="3.6" ry="3.5"/><ellipse cx="916.1" cy="952.9" rx="3.3" ry="4.0"/><ellipse cx="927.5" cy="958.7" rx="4.5" ry="4.0"/><ellipse cx="935.5" cy="1027.7" rx="4.3" ry="3.4"/><ellipse cx="941.8" cy="998.8" rx="4.4" ry="3.0"/><ellipse cx="947.2" cy="973.3" rx="5.0" ry="2.6"/><ellipse cx="918.2" cy="1005.8" rx="4.3" ry="3.4"/><ellipse cx="976.2" cy="1026.9" rx="4.1" ry="3.5"/><ellipse cx="945.7" cy="966.8" rx="4.7" ry="3.2"/><ellipse cx="949.0" cy="961.7" rx="5.4" ry="3.7"/><ellipse cx="990.2" cy="1031.3" rx="3.6" ry="3.4"/><ellipse cx="998.2" cy="1016.0" rx="3.3" ry="2.6"/><ellipse cx="965.3" cy="1007.6" rx="5.2" ry="2.7"/><ellipse cx="970.9" cy="989.0" rx="3.4" ry="4.0"/><ellipse cx="943.5" cy="1038.5" rx="5.1" ry="2.7"/><ellipse cx="936.8" cy="967.3" rx="3.8" ry="2.8"/><ellipse cx="923.2" cy="998.3" rx="3.0" ry="3.4"/><ellipse cx="924.8" cy="983.6" rx="4.3" ry="2.5"/><ellipse cx="1003.2" cy="1008.3" rx="5.4" ry="2.6"/><ellipse cx="900.5" cy="953.3" rx="5.0" ry="2.9"/><ellipse cx="893.7" cy="1030.8" rx="5.0" ry="2.6"/><ellipse cx="925.7" cy="973.0" rx="5.3" ry="2.9"/><ellipse cx="909.2" cy="936.8" rx="3.8" ry="3.8"/><ellipse cx="919.8" cy="965.0" rx="3.4" ry="3.0"/><ellipse cx="973.0" cy="972.7" rx="3.5" ry="3.3"/><ellipse cx="944.4" cy="1015.2" rx="4.0" ry="3.3"/><ellipse cx="967.5" cy="1037.4" rx="3.9" ry="3.9"/><ellipse cx="969.8" cy="985.4" rx="4.0" ry="3.0"/><ellipse cx="986.0" cy="1020.6" rx="4.7" ry="2.9"/><ellipse cx="914.1" cy="934.0" rx="4.1" ry="2.7"/><ellipse cx="1000.4" cy="1035.9" rx="4.4" ry="2.8"/><ellipse cx="930.8" cy="961.2" rx="4.3" ry="2.8"/><ellipse cx="955.3" cy="969.4" rx="4.9" ry="3.6"/><ellipse cx="970.9" cy="1021.9" rx="4.0" ry="3.0"/><ellipse cx="971.9" cy="986.5" rx="3.1" ry="3.9"/><ellipse cx="992.0" cy="984.1" rx="4.8" ry="3.9"/><ellipse cx="985.2" cy="1010.7" rx="5.1" ry="3.5"/><ellipse cx="992.1" cy="992.4" rx="4.7" ry="2.8"/><ellipse cx="960.3" cy="983.9" rx="4.7" ry="3.3"/><ellipse cx="885.4" cy="1009.7" rx="4.3" ry="3.4"/></g>
<path d="M600 700 C601.3 704.2 604.2 716.3 608.0 725.0 C611.8 733.7 617.5 744.0 623.0 752.0 C628.5 760.0 634.5 767.0 641.0 773.0 C647.5 779.0 654.5 783.5 662.0 788.0 C669.5 792.5 678.0 796.8 686.0 800.0 C694.0 803.2 701.0 804.9 710.0 807.4 C719.0 809.9 729.3 811.9 740.0 815.0 C750.7 818.1 760.5 822.1 774.0 826.0 C787.5 829.9 806.5 834.3 821.0 838.5 C835.5 842.7 850.7 846.8 861.0 851.0 C871.3 855.2 875.7 858.3 883.0 863.5 C890.3 868.7 898.2 875.8 905.0 882.0 C911.8 888.2 916.9 894.7 923.6 901.0 C930.4 907.3 941.9 916.5 945.5 919.6" fill="none" stroke="#0a4a8a" stroke-width="13" opacity=".5" filter="url(#b4)" transform="translate(4 6)"/>
<path d="M782 836 L850 852 L892 880 L872 890 L838 870 L790 852 Z" fill="#04246a" opacity=".8" filter="url(#b4)"/>
<path d="M700 810 L742 818 L748 834 L712 830 Z" fill="#04286a" opacity=".7" filter="url(#b4)"/>
<path d="M560.3 883.8 C560.8 881.8 561.2 875.4 563.0 872.0 C564.8 868.6 566.5 866.5 571.0 863.5 C575.5 860.5 583.2 855.5 590.0 854.0 C596.8 852.5 605.5 853.1 611.7 854.7 C617.9 856.3 623.4 859.5 627.3 863.5 C631.2 867.5 632.9 871.8 635.0 879.0 C637.1 886.2 638.5 897.2 639.8 907.0 C641.1 916.8 641.0 927.6 643.0 938.0 C645.0 948.4 647.3 960.1 652.0 969.5 C656.7 978.9 663.7 986.2 671.0 994.5 C678.3 1002.8 686.7 1011.6 696.0 1019.4 C705.3 1027.2 716.7 1035.4 727.0 1041.0 C737.3 1046.6 747.5 1050.3 758.0 1053.0 C768.5 1055.7 784.7 1056.3 790.0 1057.0 C775.0 1056.7 725.0 1055.5 700.0 1055.0 C675.0 1054.5 659.0 1054.2 640.0 1054.0 C621.0 1053.8 595.0 1053.6 586.0 1053.5 C586.2 1052.8 585.2 1053.6 587.4 1049.0 C589.6 1044.4 595.2 1035.9 599.0 1025.7 C602.8 1015.5 607.1 999.5 610.0 988.0 C612.9 976.5 615.1 966.3 616.4 957.0 C617.7 947.7 618.2 940.3 618.0 932.0 C617.8 923.7 616.7 914.3 614.9 907.0 C613.1 899.7 610.6 893.1 607.0 888.4 C603.4 883.7 597.9 880.1 593.0 879.0 C588.1 877.9 581.3 879.9 577.4 882.0 C573.5 884.1 570.9 890.0 569.6 891.6 C568.0 890.3 561.8 885.1 560.3 883.8 Z" fill="#085866" opacity=".85" filter="url(#b4)" transform="translate(20 9)"/>
<rect x="150" y="978" width="900" height="36" fill="#22bfe2" opacity=".5" filter="url(#b14)"/>
<path d="M283 1030 C285.8 1032.7 287.5 1043.3 300.0 1046.0 C312.5 1048.7 332.7 1046.3 358.0 1046.0 C383.3 1045.7 426.0 1044.2 452.0 1044.0 C478.0 1043.8 491.7 1044.7 514.0 1045.0 C536.3 1045.3 555.0 1045.5 586.0 1046.0 C617.0 1046.5 668.7 1047.3 700.0 1048.0 C731.3 1048.7 743.5 1048.8 774.0 1050.0 C804.5 1051.2 852.0 1054.5 883.0 1055.0 C914.0 1055.5 947.2 1053.3 960.0 1053.0" fill="none" stroke="#0a5a4a" stroke-width="20" opacity=".9" filter="url(#b8)"/>
<path d="M640 1052 L760 1056 L900 1060 L900 1070 L640 1070 Z" fill="#07402e" opacity=".7" filter="url(#b4)"/>
<path d="M285 1000 L372 1000 L640 994 L640 1030 L285 1030 Z" fill="#1a8eb0" opacity=".45" filter="url(#b8)"/>
<path d="M272 1030 L300 1025 L420 1025 L600 1022 L600 1064 L272 1064 Z" fill="url(#botg)" filter="url(#b4)"/>
<path d="M930 1046 L1010 1030 L1010 1070 L930 1070 Z" fill="#30b4e0" opacity=".7" filter="url(#b8)"/>
<path d="M172 900 C172.3 905.8 172.3 926.3 174.0 935.0 C175.7 943.7 174.7 947.5 182.0 952.0 C189.3 956.5 204.2 959.2 218.0 962.0 C231.8 964.8 250.8 966.8 264.8 969.0 C278.8 971.2 289.5 972.5 302.0 975.0 C314.5 977.5 333.7 982.5 340.0 984.0" fill="none" stroke="#2a8cc6" stroke-width="30" opacity=".5" filter="url(#b8)"/>
<path d="M172 900 C172.3 905.8 172.3 926.3 174.0 935.0 C175.7 943.7 174.7 947.5 182.0 952.0 C189.3 956.5 204.2 959.2 218.0 962.0 C231.8 964.8 250.8 966.8 264.8 969.0 C278.8 971.2 289.5 972.5 302.0 975.0 C314.5 977.5 333.7 982.5 340.0 984.0" fill="none" stroke="#2c74b4" stroke-width="12" opacity=".35" filter="url(#b4)"/>
<path d="M340 984 L640 1000 L640 1034 L290 1030 L372 1003 Z" fill="#1c98c0" opacity=".42" filter="url(#b8)"/>
<g fill="#2a62a8" opacity=".55"><circle cx="183.6" cy="946.7" r="1.5"/><circle cx="304.3" cy="974.9" r="1.7"/><circle cx="256.9" cy="966.4" r="2.1"/><circle cx="281.9" cy="965.4" r="1.6"/><circle cx="300.9" cy="976.1" r="1.2"/><circle cx="181.2" cy="945.3" r="2.2"/><circle cx="289.0" cy="972.2" r="1.9"/><circle cx="251.3" cy="967.5" r="1.5"/><circle cx="345.8" cy="979.5" r="1.8"/><circle cx="318.3" cy="978.0" r="1.6"/><circle cx="211.4" cy="945.9" r="2.0"/><circle cx="196.9" cy="953.0" r="1.4"/><circle cx="315.6" cy="984.2" r="2.2"/><circle cx="214.9" cy="950.7" r="1.2"/><circle cx="169.4" cy="909.3" r="1.7"/><circle cx="229.4" cy="948.0" r="2.3"/><circle cx="316.6" cy="985.6" r="2.2"/><circle cx="328.5" cy="980.8" r="1.8"/><circle cx="347.3" cy="985.2" r="1.8"/><circle cx="217.4" cy="947.4" r="2.4"/><circle cx="224.6" cy="950.0" r="1.6"/><circle cx="259.6" cy="962.4" r="2.5"/><circle cx="328.6" cy="983.6" r="2.5"/><circle cx="336.9" cy="987.5" r="1.3"/><circle cx="299.9" cy="978.1" r="2.1"/><circle cx="219.4" cy="959.5" r="1.4"/><circle cx="253.7" cy="959.5" r="2.2"/><circle cx="341.4" cy="988.3" r="1.6"/><circle cx="268.9" cy="961.7" r="1.4"/><circle cx="210.8" cy="949.8" r="1.5"/><circle cx="333.6" cy="982.1" r="1.4"/><circle cx="203.2" cy="946.9" r="1.3"/><circle cx="212.4" cy="952.3" r="2.4"/><circle cx="302.7" cy="974.2" r="1.9"/><circle cx="237.0" cy="951.7" r="1.6"/><circle cx="339.1" cy="985.8" r="2.1"/><circle cx="321.3" cy="977.6" r="1.5"/><circle cx="241.6" cy="965.2" r="2.4"/><circle cx="321.9" cy="974.7" r="2.2"/><circle cx="328.6" cy="983.5" r="1.2"/><circle cx="243.1" cy="963.1" r="2.4"/><circle cx="340.6" cy="980.5" r="1.4"/><circle cx="264.5" cy="970.9" r="2.2"/><circle cx="286.9" cy="970.0" r="2.0"/><circle cx="174.5" cy="904.8" r="1.6"/><circle cx="192.9" cy="948.0" r="2.2"/><circle cx="189.0" cy="945.6" r="2.0"/><circle cx="238.3" cy="959.8" r="1.2"/><circle cx="224.5" cy="960.7" r="2.1"/><circle cx="326.5" cy="978.0" r="1.5"/><circle cx="341.3" cy="982.7" r="1.2"/><circle cx="260.3" cy="962.4" r="1.6"/><circle cx="291.3" cy="967.7" r="1.2"/><circle cx="230.7" cy="958.5" r="1.5"/><circle cx="312.9" cy="977.7" r="1.5"/><circle cx="340.6" cy="990.3" r="1.5"/><circle cx="212.3" cy="947.6" r="2.5"/><circle cx="256.9" cy="959.6" r="1.8"/><circle cx="291.1" cy="966.5" r="1.8"/><circle cx="212.1" cy="945.0" r="1.3"/><circle cx="181.9" cy="948.4" r="2.4"/><circle cx="303.2" cy="980.7" r="1.7"/><circle cx="207.1" cy="952.2" r="1.2"/><circle cx="287.5" cy="969.6" r="1.7"/><circle cx="198.6" cy="944.9" r="1.7"/><circle cx="337.0" cy="991.6" r="1.5"/><circle cx="236.3" cy="961.4" r="1.8"/><circle cx="169.9" cy="913.2" r="1.7"/><circle cx="326.2" cy="981.1" r="2.3"/><circle cx="303.4" cy="969.7" r="1.3"/></g>
<path d="M290 1022 L372 1003 L372 1012 L300 1030 Z" fill="#5ae0ea" opacity=".6" filter="url(#b4)"/>
<path d="M423 519 C440 517 470 522 492 531 C486 538 470 541.5 455 541 C440 540.5 428 534 423 519 Z" fill="#175c2a"/>
<path d="M430 523 C445 521 468 525 484 531 C476 535 462 536 450 535 C440 534 433 530 430 523 Z" fill="#0f4a20" opacity=".8"/>
<path d="M415 530 C430 548 480 550 505 538" fill="none" stroke="#2a9a70" stroke-width="1.5" opacity=".7"/>
<path d="M399 695 L413 692 L410 700 L403 700 Z" fill="#fff"/>
<g fill="#2a5cae" opacity=".4"><circle cx="395.3" cy="893.1" r="1.3"/><circle cx="393.5" cy="894.8" r="0.9"/><circle cx="398.4" cy="898.2" r="0.9"/><circle cx="378.2" cy="897.8" r="0.9"/><circle cx="318.3" cy="918.0" r="1.4"/><circle cx="371.3" cy="909.4" r="0.7"/><circle cx="337.6" cy="909.3" r="1.5"/><circle cx="398.1" cy="894.6" r="0.9"/><circle cx="354.1" cy="906.0" r="1.4"/><circle cx="333.4" cy="915.5" r="1.3"/><circle cx="387.1" cy="903.2" r="1.2"/><circle cx="345.5" cy="905.1" r="1.0"/><circle cx="383.7" cy="892.8" r="0.9"/><circle cx="381.2" cy="896.0" r="0.8"/><circle cx="320.8" cy="914.2" r="1.0"/><circle cx="400.3" cy="902.0" r="1.5"/><circle cx="340.3" cy="902.5" r="0.8"/><circle cx="359.9" cy="908.1" r="1.1"/><circle cx="337.7" cy="908.3" r="1.2"/><circle cx="374.6" cy="905.5" r="1.4"/><circle cx="373.8" cy="895.7" r="1.4"/><circle cx="342.7" cy="909.6" r="1.0"/><circle cx="380.0" cy="895.5" r="0.9"/><circle cx="338.6" cy="903.9" r="1.4"/><circle cx="366.6" cy="900.5" r="1.0"/><circle cx="401.4" cy="895.8" r="0.9"/><circle cx="385.9" cy="901.5" r="1.5"/><circle cx="326.6" cy="911.7" r="1.4"/><circle cx="388.6" cy="905.1" r="0.7"/><circle cx="342.7" cy="902.5" r="0.9"/><circle cx="399.7" cy="897.4" r="1.4"/><circle cx="349.3" cy="913.0" r="1.1"/><circle cx="339.8" cy="913.6" r="1.5"/><circle cx="326.9" cy="913.6" r="1.2"/><circle cx="336.3" cy="907.9" r="0.8"/><circle cx="335.1" cy="906.3" r="1.2"/><circle cx="372.7" cy="897.2" r="0.7"/><circle cx="345.5" cy="910.8" r="0.8"/><circle cx="344.2" cy="903.5" r="1.3"/><circle cx="364.0" cy="896.9" r="0.8"/><circle cx="351.2" cy="907.5" r="1.2"/><circle cx="325.7" cy="906.9" r="1.3"/><circle cx="352.4" cy="903.0" r="0.9"/><circle cx="398.1" cy="893.4" r="1.2"/><circle cx="348.0" cy="906.1" r="1.4"/><circle cx="401.7" cy="893.4" r="0.9"/></g>
<path d="M350 915 C364 914 382 907 408 891 C394 905 382 914 366 920 Z" fill="#2a6ada" opacity=".9"/>
<path d="M326 908.5 C338 910 346 916.5 355 915.6 C364 914.6 372 912 380 908.5 C374 917.5 366 923.4 356 923.6 C346 923 338 915 326 908.5 Z" fill="#04101a"/>
<ellipse cx="376" cy="888" rx="5" ry="3.6" transform="rotate(0 376 888)" fill="#3a8ed0" opacity="0.35"/><ellipse cx="369" cy="892" rx="2.6" ry="2" transform="rotate(0 369 892)" fill="#3a8ed0" opacity="0.35"/><ellipse cx="352" cy="943" rx="4" ry="3" transform="rotate(0 352 943)" fill="#3a8ed0" opacity="0.35"/><ellipse cx="340" cy="925" rx="3" ry="2.4" transform="rotate(0 340 925)" fill="#3a8ed0" opacity="0.3"/>
</g>
<!-- S -->
<path d="M1052.0 454.0 C1052.0 458.2 1056.0 470.3 1052.0 479.0 C1048.0 487.7 1035.0 495.0 1028.0 506.0 C1021.0 517.0 1015.0 531.0 1010.0 545.0 C1005.0 559.0 1001.0 575.5 998.0 590.0 C995.0 604.5 993.8 619.5 992.0 632.0 C990.2 644.5 988.2 659.5 987.4 665.0 C985.8 665.4 981.0 667.5 978.0 667.5 C975.0 667.5 970.8 665.4 969.4 665.0 C968.1 659.5 965.6 643.0 961.9 632.0 C958.1 621.0 953.9 610.0 946.9 599.0 C939.9 588.0 930.4 575.5 919.9 566.0 C909.4 556.5 896.4 548.5 883.9 542.0 C871.4 535.5 857.9 530.6 844.9 527.0 C831.9 523.4 818.4 521.4 805.9 520.4 C793.4 519.4 781.0 519.9 770.0 521.0 C759.0 522.1 750.0 523.2 740.0 527.0 C730.0 530.8 718.0 537.0 710.0 543.5 C702.0 550.0 696.5 558.2 692.0 566.0 C687.5 573.8 684.6 582.0 683.0 590.0 C681.4 598.0 681.4 606.0 682.4 614.0 C683.4 622.0 685.4 630.5 689.0 638.0 C692.6 645.5 697.5 652.0 704.0 659.0 C710.5 666.0 720.0 674.0 728.0 680.0 C736.0 686.0 740.0 689.5 752.0 695.0 C764.0 700.5 782.0 706.7 800.0 713.0 C818.0 719.3 842.5 727.1 860.0 733.0 C877.5 738.9 890.8 742.7 905.0 748.5 C919.2 754.3 932.5 760.4 945.0 768.0 C957.5 775.6 970.8 785.0 980.0 794.0 C989.2 803.0 994.8 812.7 1000.0 822.0 C1005.2 831.3 1008.2 840.3 1011.0 850.0 C1013.8 859.7 1015.7 870.0 1016.5 880.0 C1017.3 890.0 1017.1 900.0 1016.0 910.0 C1014.9 920.0 1013.2 929.6 1010.0 940.0 C1006.8 950.4 999.2 967.2 997.0 972.6 C995.7 970.0 993.4 962.8 989.0 957.0 C984.6 951.2 977.6 944.2 970.4 938.0 C963.1 931.8 953.3 925.8 945.5 919.6 C937.7 913.4 930.4 907.3 923.6 901.0 C916.9 894.7 911.8 888.2 905.0 882.0 C898.2 875.8 890.3 868.7 883.0 863.5 C875.7 858.3 871.3 855.2 861.0 851.0 C850.7 846.8 835.5 842.7 821.0 838.5 C806.5 834.3 787.5 829.9 774.0 826.0 C760.5 822.1 750.7 818.1 740.0 815.0 C729.3 811.9 719.0 809.9 710.0 807.4 C701.0 804.9 694.0 803.2 686.0 800.0 C678.0 796.8 669.5 792.5 662.0 788.0 C654.5 783.5 647.5 779.0 641.0 773.0 C634.5 767.0 628.5 760.0 623.0 752.0 C617.5 744.0 611.8 734.0 608.0 725.0 C604.2 716.0 602.2 707.5 600.5 698.0 C598.8 688.5 597.5 678.0 597.5 668.0 C597.5 658.0 598.2 648.0 600.5 638.0 C602.8 628.0 606.2 618.0 611.0 608.0 C615.8 598.0 621.0 588.0 629.0 578.0 C637.0 568.0 648.0 557.5 659.0 548.0 C670.0 538.5 681.5 529.5 695.0 521.0 C708.5 512.5 725.0 503.2 740.0 497.0 C755.0 490.8 770.0 486.6 785.0 483.5 C800.0 480.4 812.5 478.9 830.0 478.4 C847.5 477.9 870.0 478.6 890.0 480.5 C910.0 482.4 932.0 485.5 950.0 489.5 C968.0 493.5 990.0 502.0 998.0 504.5 C1000.0 501.8 1005.0 494.2 1010.0 488.0 C1015.0 481.8 1021.0 472.7 1028.0 467.0 C1035.0 461.3 1048.0 456.2 1052.0 454.0 Z" fill="#414141"/>
<path d="M560.3 883.8 C560.8 881.8 561.2 875.4 563.0 872.0 C564.8 868.6 566.5 866.5 571.0 863.5 C575.5 860.5 583.2 855.5 590.0 854.0 C596.8 852.5 605.5 853.1 611.7 854.7 C617.9 856.3 623.4 859.5 627.3 863.5 C631.2 867.5 632.9 871.8 635.0 879.0 C637.1 886.2 638.5 897.2 639.8 907.0 C641.1 916.8 641.0 927.6 643.0 938.0 C645.0 948.4 647.3 960.1 652.0 969.5 C656.7 978.9 663.7 986.2 671.0 994.5 C678.3 1002.8 686.7 1011.6 696.0 1019.4 C705.3 1027.2 716.7 1035.4 727.0 1041.0 C737.3 1046.6 747.5 1050.3 758.0 1053.0 C768.5 1055.7 784.7 1056.3 790.0 1057.0 C775.0 1056.7 725.0 1055.5 700.0 1055.0 C675.0 1054.5 659.0 1054.2 640.0 1054.0 C621.0 1053.8 595.0 1053.6 586.0 1053.5 C586.2 1052.8 585.2 1053.6 587.4 1049.0 C589.6 1044.4 595.2 1035.9 599.0 1025.7 C602.8 1015.5 607.1 999.5 610.0 988.0 C612.9 976.5 615.1 966.3 616.4 957.0 C617.7 947.7 618.2 940.3 618.0 932.0 C617.8 923.7 616.7 914.3 614.9 907.0 C613.1 899.7 610.6 893.1 607.0 888.4 C603.4 883.7 597.9 880.1 593.0 879.0 C588.1 877.9 581.3 879.9 577.4 882.0 C573.5 884.1 570.9 890.0 569.6 891.6 C568.0 890.3 561.8 885.1 560.3 883.8 Z" fill="#414141"/>
<path d="M431.4 426 C428.5 438 431 452 438.5 471 C444 484 450 494 457.5 501.5 C460.5 488 459.5 474 456 460.7 C451 446 442 434 431.4 426 Z" fill="#28cef6"/>
<path d="M431.8 430 C430 442 433 456 439.5 470 C443 476 445 480 447.5 482 C446 470 446.5 462 443 452 C440 442 436 436 431.8 430 Z" fill="#348ed6"/>
<path d="M452 486 C455 480 456 476 456.5 470 C458.5 482 458.5 492 457.5 500 C455 496 453 492 452 486 Z" fill="#3a98d8" opacity=".8"/>
<path d="M471.4 403 C465 412 462.6 422 463.2 431 C464.5 446 469 458 474.5 469.5 C477 460 476.8 452 475.9 444.4 C475.4 430 474 416 471.4 403 Z" fill="#2ec6f2"/>
<path d="M471 408 C467.5 416 466 426 467.5 436 C470 442 473 446 475.7 448 C475.4 432 473.8 420 471 408 Z" fill="#3288d4"/>
<path d="M470.5 448 C472.5 448.5 474.5 448.4 475.9 447.4 C476.8 454 476.6 462 474.5 469.5 C472.4 463 471 456 470.5 448 Z" fill="#49cf84"/>
<path d="M521.4 420 C508 428 500 438 495.6 447 C488 462 482.5 478 480.6 494.7 C493 486 504 474 511.9 460.7 C517.5 448 520.6 434 521.4 420 Z" fill="#27d0f7"/>
<path d="M518 432 C510 438 503 446 498 456 C495.5 461 494.5 464 494 467 C502 462 508 456 513 449 C515.6 444 517 438 518 432 Z" fill="#3494d8"/>
<path d="M512.5 458 C505 470 494 484 482 493.4 C484 484 488 478 494 470.5 C500 466.5 506 462 512.5 456 Z" fill="#4bcf86"/>
<path d="M1004 752 C1010 759 1024 764 1050 766 L1050 803 C1030 794 1012 776 1004 752 Z" fill="#34e3fb"/>
<path d="M1004 752 C1008 757 1013 760 1018 761.5 C1016 766 1014 770 1012.5 773 C1008.5 767 1006 760 1004 752 Z" fill="#2fc2ee" opacity=".9"/>
</svg>
<div class="abs" style="left:0;top:0;width:9px;height:1110px;background:linear-gradient(90deg,rgba(0,0,0,.22),rgba(0,0,0,0))"></div>
<div class="abs" style="right:0;top:0;width:10px;height:1110px;background:linear-gradient(270deg,rgba(0,0,0,.3),rgba(0,0,0,0))"></div>
</div>
<!-- PANEL -->
<div id="pn" class="abs"></div>
<div class="abs" style="left:1051px;top:129px;width:615px;height:31px;background:#424242;border-radius:5px 5px 0 0"></div>
<div class="abs" style="left:1051px;top:160px;width:615px;height:3px;background:#393939"></div>
<div class="abs" style="left:1051px;top:163px;width:615px;height:73px;background:#424242"></div>
<div class="abs" style="left:1186px;top:163px;width:480px;height:73px;background:#424242;border-left:3px solid #3b3b3b;border-bottom:2.5px solid #3b3b3b"></div>
<div class="abs" style="left:1051px;top:163px;width:135px;height:75px;background:#535353"></div>
<!-- row separators -->
<div class="abs" style="left:1051px;top:317px;width:615px;height:2.5px;background:#454545"></div>
<div class="abs" style="left:1051px;top:391px;width:615px;height:2.5px;background:#454545"></div>
<!-- boxes -->
<div class="dd" style="left:1060px;top:259px;width:229px;height:49px;border-color:#626262"></div>
<div class="dd" style="left:1060px;top:333px;width:341px;height:48px;border-color:#626262"></div>
<div class="dd" style="left:1521.5px;top:332.5px;width:132px;height:45.5px;border-color:#626262"></div>
<div class="dd" style="left:1521.5px;top:406.5px;width:132px;height:45.5px;border-color:#626262"></div>
<div class="abs" style="left:1614.8px;top:334.5px;width:2px;height:41.5px;background:#626262"></div>
<div class="abs" style="left:1614.8px;top:408.5px;width:2px;height:41.5px;background:#626262"></div>
<div class="abs" style="left:1135px;top:399.5px;width:55px;height:62px;background:#383838;border:2px solid #606060;border-radius:6px"></div>
<!-- toggle -->
<div class="abs" style="left:1632.5px;top:261px;width:23.5px;height:47px;background:#464646;border:2px solid #6a6a6a;border-radius:12px"></div>
<div class="abs" style="left:1633.5px;top:260.5px;width:21.5px;height:21.5px;background:#e2e2e2;border-radius:50%"></div>
<div class="t" style="left:1075.8px;top:185.5px;font-size:27px;transform:scaleX(0.967);font-weight:700;color:#ececec">Layers</div>
<div class="t" style="left:1117.4px;top:270.5px;font-size:27.5px;transform:scaleX(0.948)">Kind</div>
<div class="t" style="left:1080.3px;top:343.8px;font-size:27px;transform:scaleX(1.015)">Normal</div>
<div class="t" style="left:1411.4px;top:343.8px;font-size:27px;transform:scaleX(1.027)">Opacity:</div>
<div class="t" style="left:1532.3px;top:343.8px;font-size:27px;transform:scaleX(0.959)">100%</div>
<div class="t" style="left:1064.6px;top:417.8px;font-size:27px;transform:scaleX(1.002)">Lock:</div>
<div class="t" style="left:1472.8px;top:417.8px;font-size:27px;transform:scaleX(0.957)">Fill:</div>
<div class="t" style="left:1532.3px;top:417.8px;font-size:27px;transform:scaleX(0.959)">100%</div>
<div class="abs" style="left:1051px;top:472px;width:575px;height:498px;background:#535353"></div>
<div class="abs" style="left:1051px;top:970px;width:615px;height:280px;background:#4e4e4e"></div>
<div class="abs" style="left:1626px;top:472px;width:40px;height:778px;background:#4b4b4b"></div>
<div class="abs" style="left:1130px;top:582px;width:496px;height:105px;background:#6b6b6b"></div>
<div class="abs" style="left:1051px;top:470.8px;width:575px;height:2.6px;background:#454545"></div>
<div class="abs" style="left:1051px;top:579.5px;width:575px;height:2.6px;background:#454545"></div>
<div class="abs" style="left:1051px;top:687px;width:575px;height:2.6px;background:#454545"></div>
<div class="abs" style="left:1051px;top:794px;width:575px;height:2.6px;background:#454545"></div>
<div class="abs" style="left:1051px;top:860.5px;width:575px;height:2.6px;background:#454545"></div>
<div class="abs" style="left:1051px;top:969px;width:575px;height:2.6px;background:#454545"></div>
<div class="abs" style="left:1128.2px;top:472px;width:2.2px;height:498px;background:#454545"></div>
<div class="abs" style="left:1073px;top:512px;width:30.5px;height:30.5px;border:2px solid #454545;border-right-color:#4c4c4c;border-top-color:#484848"></div>
<div class="abs" style="left:1073px;top:901px;width:30.5px;height:30.5px;border:2px solid #454545;border-right-color:#4c4c4c;border-top-color:#484848"></div>
<div class="abs" style="left:1138.7px;top:484.2px;width:84.5px;height:84.2px;border:3px solid #2d2d2d;background-color:#fff;background-image:conic-gradient(#ccc 25%,#fff 0 50%,#ccc 0 75%,#fff 0);background-size:10.1px 10.1px;background-position:-1.5px -1.5px"></div>
<div class="abs" style="left:1138.7px;top:592.2px;width:84.5px;height:84.2px;border:3px solid #2d2d2d;background-color:#fff;background-image:conic-gradient(#ccc 25%,#fff 0 50%,#ccc 0 75%,#fff 0);background-size:10.1px 10.1px;background-position:-1.5px -1.5px"></div>
<div class="abs" style="left:1262px;top:592.2px;width:83px;height:84.2px;border:3px solid #2d2d2d;background:#fff"></div>
<div class="abs" style="left:1138.7px;top:699.8px;width:84.5px;height:84.2px;border:3px solid #2d2d2d;background-color:#fff;background-image:conic-gradient(#ccc 25%,#fff 0 50%,#ccc 0 75%,#fff 0);background-size:10.1px 10.1px;background-position:-1.5px -1.5px"></div>
<div class="abs" style="left:1262px;top:699.8px;width:83px;height:84.2px;border:3px solid #2d2d2d;background:#000"></div>
<div class="abs" style="left:1138.7px;top:873.2px;width:84.5px;height:84.2px;border:3px solid #2d2d2d;background:#fff"></div>
<div class="t" style="left:1244.4px;top:513.9px;font-size:27px;transform:scaleX(1.013)">Layer 5</div>
<div class="t" style="left:1366.8px;top:621.9px;font-size:27px;transform:scaleX(1.013)">Layer 3</div>
<div class="t" style="left:1366.8px;top:729.3px;font-size:27px;transform:scaleX(1.013)">Layer 4</div>
<div class="t" style="left:1235.8px;top:814.9px;font-size:27px;transform:scaleX(0.984)">Group 1</div>
<div class="t" style="left:1244.4px;top:902.7px;font-size:27px;transform:scaleX(1.013)">Layer 2</div>
<div class="t" style="left:1165.8px;top:604.4px;font-family:'Liberation Serif',serif;font-size:54px;color:#404040;transform:scaleX(1.16)">S</div>
<div class="t" style="left:1165.8px;top:712.4px;font-family:'Liberation Serif',serif;font-size:54px;color:#000;transform:scaleX(1.16);clip-path:polygon(0 0,100% 0,100% 38px,23px 38px,19.5px 42.5px,19.5px 100%,0 100%)">S</div>
<div class="abs" style="left:1146px;top:540.4px;width:73px;height:1.6px;background:#d6f2f4"></div>
<svg width="1668" height="1250" viewBox="0 0 1668 1250" style="left:0;top:0"><defs><filter id="mb" x="-20%" y="-300%" width="140%" height="700%"><feGaussianBlur stdDeviation="2.2 0.7"/></filter></defs><ellipse cx="1303.5" cy="650.6" rx="32" ry="2.3" fill="#000" filter="url(#mb)"/><ellipse cx="1303" cy="650.4" rx="17" ry="2.1" fill="#000"/><path d="M1289.4 646.6 C1296 649.6 1306 648.6 1309.8 644 C1309.4 639.6 1313.6 638.2 1315 641.6 C1316.4 646.6 1312 651.4 1303 652 C1296 652.4 1291 650 1289.4 646.6 Z" fill="#000"/><path fill="#fff" d="M1268.1 734.8 C1270 729 1273 726 1276.2 724.9 C1279 723.4 1281.5 723 1283.4 723.1 C1287.5 723.3 1291 724.6 1294.2 726.7 C1298 729.4 1300.5 732.6 1303.2 735.7 L1312.2 745.6 L1315.8 751 C1318.5 746.5 1319 742.5 1316.7 738.9 C1325 740.5 1333 739.5 1340.1 736.9 C1335.5 740.2 1331 741.5 1328.4 743.8 C1325.5 746.5 1325.5 751 1323 753.6 L1318.5 753.6 C1320.2 751.8 1321.2 749.6 1321.2 747.4 C1319.8 750.6 1318 753.2 1315.8 754.9 L1279.8 753.6 L1275.3 754.5 L1274.8 751.8 L1269 750.1 C1267.6 747 1267.4 744 1267.8 742 Z"/><path d="M1283.2 722.6 L1282.2 719.2 M1285 722.6 L1286.2 719.4" stroke="#fff" stroke-width="1" fill="none"/></svg>
<svg width="1668" height="1250" viewBox="0 0 1668 1250" style="left:0;top:0;pointer-events:none">
<path d="M1066 141 L1077.6 153.4 M1077.6 141 L1066 153.4" stroke="#b8b8b8" stroke-width="4.4" fill="none"/>
<path fill="#d4d4d4" d="M1637 139.2 L1630 145.8 L1637 152.4 L1635.6 145.8 Z M1647.4 139.2 L1640.2 145.8 L1647.4 152.4 L1646 145.8 Z"/>
<g fill="#c6c6c6"><rect x="1626.4" y="189" width="25.4" height="2"/><rect x="1626.4" y="194.2" width="25.4" height="2"/><rect x="1626.4" y="199.4" width="25.4" height="2"/><rect x="1626.4" y="204.6" width="25.4" height="2"/></g>
<circle cx="1094" cy="282.6" r="9.2" fill="none" stroke="#dadada" stroke-width="2.6"/><path d="M1100.8 289.8 L1107.6 296.8" stroke="#dadada" stroke-width="4.2" stroke-linecap="round"/>
<path d="M1263.5 282.5 L1270.65 289.7 L1277.8 282.5" fill="none" stroke="#dadada" stroke-width="2.6" stroke-linecap="round" stroke-linejoin="round"/><path d="M1376.1000000000001 356.0 L1383.35 363.6 L1390.6 356.0" fill="none" stroke="#dadada" stroke-width="2.6" stroke-linecap="round" stroke-linejoin="round"/><path d="M1628.5 356.0 L1635.4499999999998 363.6 L1642.3999999999999 356.0" fill="none" stroke="#dadada" stroke-width="2.6" stroke-linecap="round" stroke-linejoin="round"/><path d="M1628.5 429.8 L1635.4499999999998 437.40000000000003 L1642.3999999999999 429.8" fill="none" stroke="#dadada" stroke-width="2.6" stroke-linecap="round" stroke-linejoin="round"/>
<rect x="1321.5" y="271.5" width="29.4" height="24.2" fill="none" stroke="#dadada" stroke-width="2.5"/><path fill="#dadada" d="M1326 290.8 L1332.6 279.6 L1336.6 286.4 L1341.4 281.8 L1346.6 290.8 Z"/>
<circle cx="1397.8" cy="283" r="12.6" fill="none" stroke="#dadada" stroke-width="2.3"/><path fill="#dadada" d="M1388.9 291.9 A12.6 12.6 0 0 0 1406.7 274.1 Z"/>
<path fill="#dadada" d="M1448.2 270.3 H1472.8 V277.8 H1470.4 C1470.2 275.4 1469.4 274 1467 274 H1463.3 V291 C1463.3 292.8 1464.4 293.4 1467.8 293.5 V296.8 H1453.2 V293.5 C1456.6 293.4 1457.9 292.8 1457.9 291 V274 H1454 C1451.6 274 1450.8 275.4 1450.6 277.8 H1448.2 Z"/>
<path d="M1512.4 272.7 H1534.5 V294.2 H1512.4 Z" fill="none" stroke="#dadada" stroke-width="2.4"/><rect x="1509.0" y="269.3" width="6.8" height="6.8" fill="#dadada"/><rect x="1511.3000000000002" y="271.59999999999997" width="2.2" height="2.2" fill="#535353"/><rect x="1531.1" y="269.3" width="6.8" height="6.8" fill="#dadada"/><rect x="1533.4" y="271.59999999999997" width="2.2" height="2.2" fill="#535353"/><rect x="1509.0" y="290.8" width="6.8" height="6.8" fill="#dadada"/><rect x="1511.3000000000002" y="293.09999999999997" width="2.2" height="2.2" fill="#535353"/><rect x="1531.1" y="290.8" width="6.8" height="6.8" fill="#dadada"/><rect x="1533.4" y="293.09999999999997" width="2.2" height="2.2" fill="#535353"/>
<path d="M1581.8 284 V270.6 H1592.6 L1598.6 276.8 V295.6 H1590" fill="none" stroke="#dadada" stroke-width="2.3"/><path d="M1592.2 270.6 V277 H1598.6" fill="none" stroke="#dadada" stroke-width="2"/><rect x="1574.2" y="284.2" width="15.6" height="14.4" fill="#dadada"/>
<rect x="1148" y="415.8" width="29.2" height="29.2" fill="#dcdcdc"/><rect x="1151.30" y="419.10" width="7.5" height="7.5" fill="#383838"/><rect x="1166.40" y="419.10" width="7.5" height="7.5" fill="#383838"/><rect x="1158.85" y="426.65" width="7.5" height="7.5" fill="#383838"/><rect x="1151.30" y="434.20" width="7.5" height="7.5" fill="#383838"/><rect x="1166.40" y="434.20" width="7.5" height="7.5" fill="#383838"/>
<g fill="#dcdcdc"><path d="M1238 413.6 C1236.4 420 1230 430.6 1225.2 437.4 L1219.4 433.6 C1224.6 425.6 1231.6 417 1238 413.6 Z"/><path d="M1217.8 435.2 L1223.6 439 C1225.4 444.4 1219.6 447.4 1213.6 448 C1210 448.4 1206.6 448.8 1204.4 448.6 C1209.4 446 1207.8 441.6 1210.4 437.6 C1212.2 434.8 1215 434.2 1217.8 435.2 Z"/></g>
<g fill="#dcdcdc"><rect x="1264" y="429.4" width="24" height="2.2"/><rect x="1274.9" y="419" width="2.2" height="23"/><path d="M1276 413.8 L1282 421.6 L1270 421.6 Z M1276 447.4 L1282 439.6 L1270 439.6 Z M1259.2 430.5 L1267 424.5 L1267 436.5 Z M1292.8 430.5 L1285 424.5 L1285 436.5 Z"/></g>
<path d="M1323.4 421.4 H1339.2 L1345.6 427.6 V438 H1323.4 Z" fill="none" stroke="#dcdcdc" stroke-width="2.4"/><path d="M1338.6 421.4 V428.2 H1345.6 Z" fill="#dcdcdc"/><g fill="#dcdcdc"><rect x="1316" y="419.4" width="3.6" height="2.2"/><rect x="1322.2" y="414.6" width="2.2" height="3.4"/><rect x="1349.4" y="419.4" width="3.6" height="2.2"/><rect x="1344.6" y="414.6" width="2.2" height="3.4"/><rect x="1316" y="437" width="3.6" height="2.4"/><rect x="1322.2" y="441.6" width="2.2" height="3.4"/><rect x="1349.4" y="437" width="3.6" height="2.4"/><rect x="1344.6" y="441.6" width="2.2" height="3.4"/></g>
<rect x="1379" y="425.2" width="25.8" height="19.4" rx="1.5" fill="#dcdcdc"/><path d="M1385.2 426 V421.8 a6.7 6.7 0 0 1 13.4 0 V426" fill="none" stroke="#dcdcdc" stroke-width="3.2"/><ellipse cx="1391.8" cy="433.8" rx="3.8" ry="3.2" fill="#535353"/>
<path fill="#dcdcdc" d="M1073.6 634.9 C1079.6 626.9 1085.6 624.6999999999999 1090.6 624.6999999999999 C1095.6 624.6999999999999 1101.6 626.9 1107.6 634.9 C1101.6 642.9 1095.6 645.1 1090.6 645.1 C1085.6 645.1 1079.6 642.9 1073.6 634.9 Z"/><circle cx="1090.6" cy="634.3" r="6.2" fill="#525252"/><circle cx="1090.6" cy="634.3" r="4.6" fill="none" stroke="#8a8a8a" stroke-width="0"/><rect x="1091.1999999999998" y="630.6999999999999" width="3" height="3" fill="#dcdcdc"/><path fill="#dcdcdc" d="M1073.6 742.3 C1079.6 734.3 1085.6 732.0999999999999 1090.6 732.0999999999999 C1095.6 732.0999999999999 1101.6 734.3 1107.6 742.3 C1101.6 750.3 1095.6 752.5 1090.6 752.5 C1085.6 752.5 1079.6 750.3 1073.6 742.3 Z"/><circle cx="1090.6" cy="741.6999999999999" r="6.2" fill="#4e4e4e"/><circle cx="1090.6" cy="741.6999999999999" r="4.6" fill="none" stroke="#8a8a8a" stroke-width="0"/><rect x="1091.1999999999998" y="738.0999999999999" width="3" height="3" fill="#dcdcdc"/><path fill="#dcdcdc" d="M1073.6 829.2 C1079.6 821.2 1085.6 819.0 1090.6 819.0 C1095.6 819.0 1101.6 821.2 1107.6 829.2 C1101.6 837.2 1095.6 839.4000000000001 1090.6 839.4000000000001 C1085.6 839.4000000000001 1079.6 837.2 1073.6 829.2 Z"/><circle cx="1090.6" cy="828.6" r="6.2" fill="#4e4e4e"/><circle cx="1090.6" cy="828.6" r="4.6" fill="none" stroke="#8a8a8a" stroke-width="0"/><rect x="1091.1999999999998" y="825.0" width="3" height="3" fill="#dcdcdc"/>
<g fill="none" stroke="#c8c8c8" stroke-width="2.2"><rect x="1233.6" y="615.4" width="16.2" height="20.6" rx="8"/><rect x="1233.6" y="630.6" width="16.2" height="20.6" rx="8"/></g><rect x="1238.4" y="624.2" width="6.6" height="18.4" rx="1.6" fill="#d8d8d8" stroke="#6b6b6b" stroke-width="1.4"/>
<path d="M1135.2 621.0 V588.3 H1167.9 M1197.9 588.3 H1226.9 V621.0 M1226.9 651.8 V680 H1197.9 M1167.9 680 H1135.2 V651.8" fill="none" stroke="#fff" stroke-width="2.3"/>
<rect x="1557.7" y="630.2" width="22.7" height="17.2" fill="none" stroke="#dcdcdc" stroke-width="3"/><path d="M1562.4 628.7 V624.2 a6.7 6.7 0 0 1 13.4 0 V628.7" fill="none" stroke="#dcdcdc" stroke-width="2.6"/><circle cx="1569.1000000000001" cy="638.9000000000001" r="2.9" fill="#dcdcdc"/><rect x="1557.7" y="911.1" width="22.7" height="17.2" fill="none" stroke="#dcdcdc" stroke-width="3"/><path d="M1562.4 909.6 V905.1 a6.7 6.7 0 0 1 13.4 0 V909.6" fill="none" stroke="#dcdcdc" stroke-width="2.6"/><circle cx="1569.1000000000001" cy="919.8000000000001" r="2.9" fill="#dcdcdc"/>
<path d="M1144.4 817 L1152.8 828.6 L1144.4 840.2" fill="none" stroke="#d2d2d2" stroke-width="2.1"/><rect x="1171" y="817.6" width="36.2" height="24.6" rx="2.4" fill="#dcdcdc"/><rect x="1171.6" y="813" width="17.4" height="2.2" rx="1" fill="#dcdcdc"/>
</svg>
<!-- EDGES -->
<div class="abs" style="left:0;top:0;width:1.1px;height:1250px;background:#fff"></div>
<div class="abs" style="left:1666.8px;top:0;width:1.2px;height:1250px;background:#a6a6a6"></div>
<div class="abs" style="left:1665.6px;top:92px;width:2.4px;height:23.6px;background:#fff"></div>
<div class="abs" style="left:1.1px;top:1248.8px;width:1667px;height:1.2px;background:#7c7c7c"></div>
</body>
</html>
